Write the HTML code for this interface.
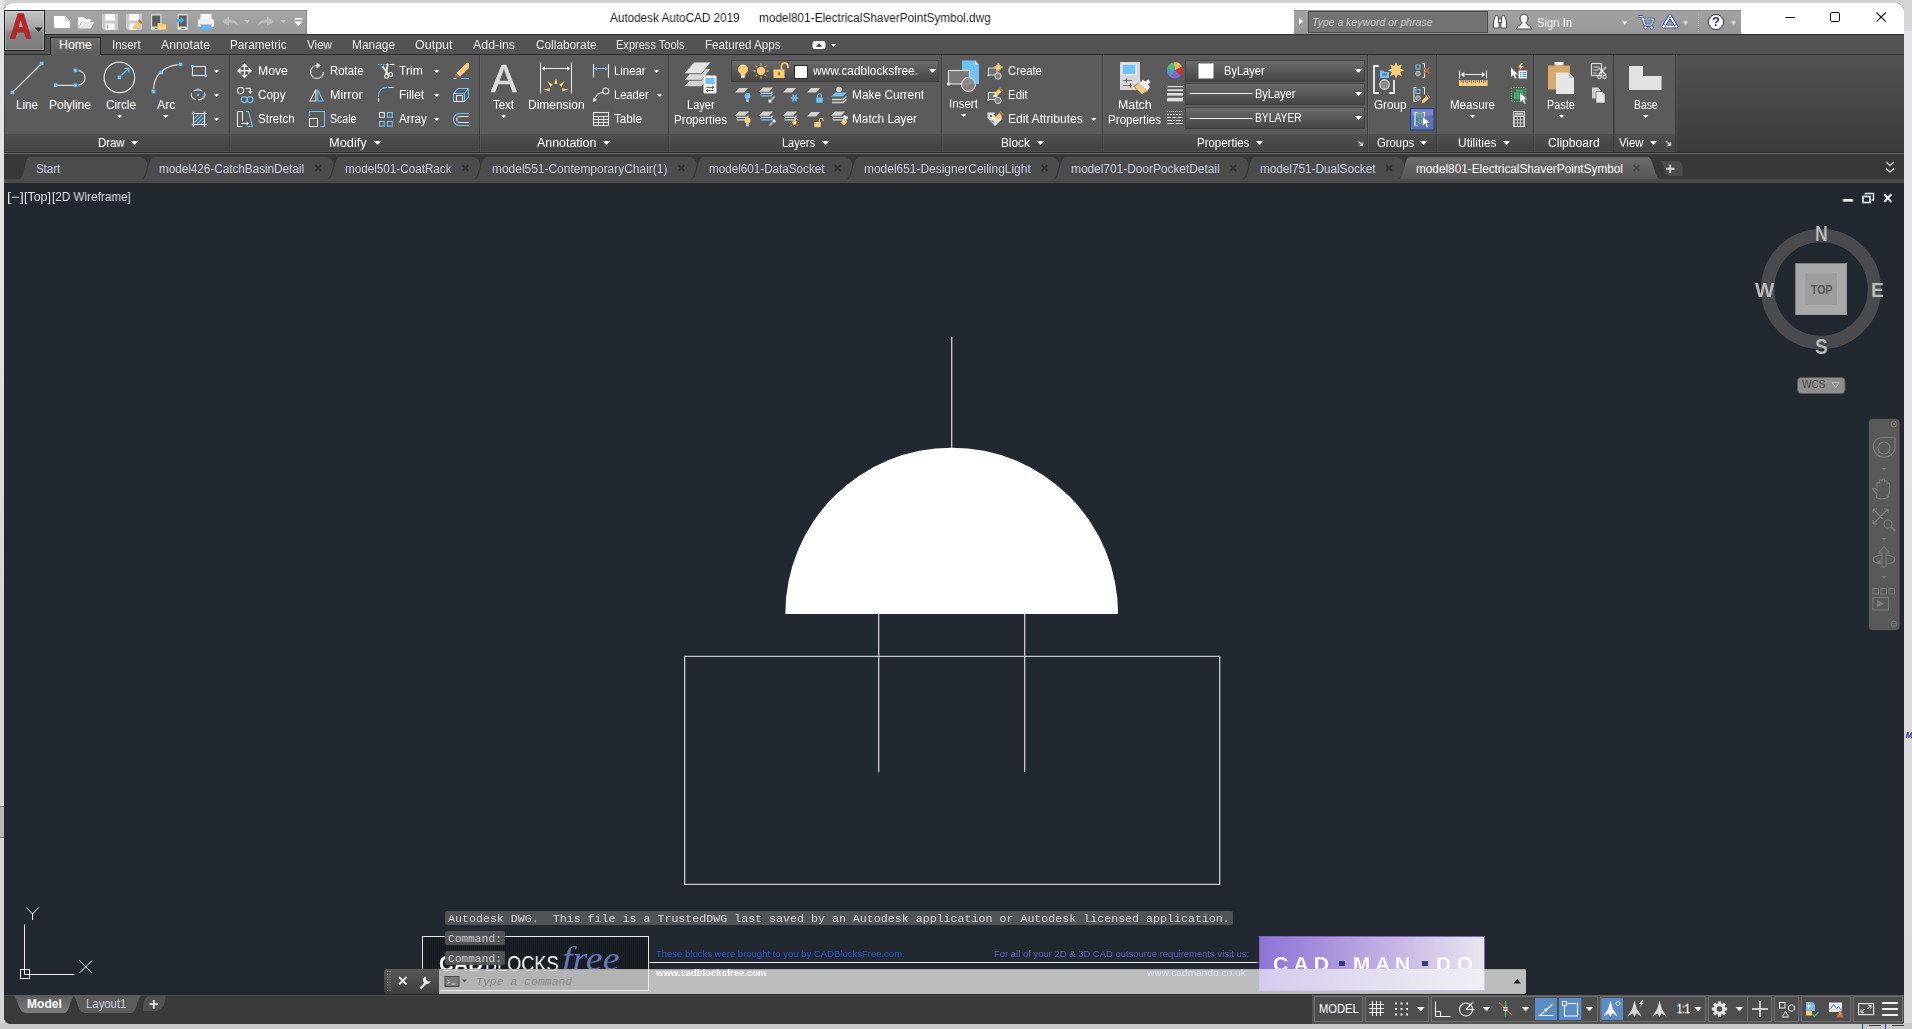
<!DOCTYPE html>
<html><head><meta charset="utf-8"><title>Autodesk AutoCAD 2019 - model801-ElectricalShaverPointSymbol.dwg</title>
<style>
html,body{margin:0;padding:0;}
body{width:1912px;height:1029px;overflow:hidden;position:relative;background:#d4d4d4;font-family:"Liberation Sans",sans-serif;}
.b{position:absolute;display:block;}
.t{position:absolute;white-space:pre;transform-origin:0 50%;}
#win{position:absolute;left:4px;top:3px;width:1900px;height:1020.5px;border-radius:8px 8px 3px 7px;overflow:hidden;background:#212830;}
#in{position:absolute;left:-4px;top:-3px;width:1912px;height:1029px;}
</style></head><body>
<div class="b" style="left:0px;top:0px;width:1912px;height:3px;background:#d2d2d2;"></div>
<div class="b" style="left:0px;top:0px;width:4px;height:1029px;background:linear-gradient(#e4e4e4 0,#e0e0e0 350px,#d5d6d5 600px,#d5d6d5 100%);"></div>
<div class="b" style="left:0px;top:806px;width:4px;height:31px;background:#b9bab9;"></div>
<div class="b" style="left:0px;top:805.5px;width:4px;height:1px;background:#7a7a7a;"></div>
<div class="b" style="left:0px;top:836.5px;width:4px;height:1px;background:#7a7a7a;"></div>
<div class="b" style="left:1904px;top:0px;width:8px;height:1029px;background:linear-gradient(#e6e6ea 0,#e6e6ea 300px,#dcdcde 700px,#dadada 100%);"></div>
<div class="b" style="left:1904px;top:0px;width:8px;height:31px;background:#d6d6d6;"></div>
<div class="t" style="left:1905.50px;top:730.00px;font-size:9px;line-height:10px;color:#2a3a9a;font-weight:bold;font-style:italic;">M</div>
<div class="b" style="left:0px;top:1023px;width:1912px;height:6px;background:#c9c9c9;"></div>
<div class="b" style="left:1862px;top:1023px;width:1.3px;height:6px;background:#1f3fc0;"></div>
<div class="b" style="left:1885px;top:1023px;width:1.3px;height:6px;background:#1f3fc0;"></div>
<div class="b" style="left:1869px;top:1025px;width:12px;height:1px;background:#3a3a3a;"></div>
<div class="b" style="left:1892px;top:1025px;width:12px;height:1px;background:#3a3a3a;"></div>
<div id="win"><div id="in">
<div class="b" style="left:0px;top:0px;width:1912px;height:34px;background:#ffffff;"></div>
<div class="b" style="left:0px;top:34px;width:1912px;height:21px;background:#535353;"></div>
<div class="b" style="left:0px;top:34px;width:1912px;height:1px;background:#2e2e2e;"></div>
<div class="b" style="left:0px;top:54px;width:1912px;height:99px;background:linear-gradient(#525252,#3b3b3b);"></div>
<div class="b" style="left:0px;top:54px;width:1912px;height:1px;background:#2b2b2b;"></div>
<div class="b" style="left:0px;top:152px;width:1912px;height:1px;background:#2a2a2a;"></div>
<div class="b" style="left:0px;top:153px;width:1912px;height:1px;background:#6a6a6a;"></div>
<div class="b" style="left:0px;top:154px;width:1912px;height:26px;background:#383838;"></div>
<div class="b" style="left:0px;top:179px;width:1912px;height:4px;background:#4a4a4a;"></div>
<div class="b" style="left:0px;top:995px;width:1912px;height:30px;background:#393a3a;"></div>
<div class="b" style="left:0px;top:995px;width:1912px;height:1px;background:#474848;"></div>
<div class="b" style="left:45px;top:10px;width:262px;height:24px;background:linear-gradient(#a6a6a6,#999999);"></div>
<div class="b" style="left:45px;top:10px;width:262px;height:1px;background:#8a8a8a;"></div>
<div class="b" style="left:306px;top:10px;width:1px;height:24px;background:#858585;"></div>
<div class="b" style="left:4px;top:10px;width:41px;height:41px;background:linear-gradient(#c4c4c4 0%,#a2a2a2 45%,#868686 55%,#7a7a7a 100%);border:1px solid #1e1e1e;box-sizing:border-box;"></div>
<div class="b" style="left:5px;top:11px;width:39px;height:39px;background:transparent;border:1px solid rgba(255,255,255,0.25);box-sizing:border-box;"></div>
<div class="t" style="left:9.80px;top:7.30px;font-size:34.5px;line-height:38px;color:#b0272c;transform:scaleX(0.8670);font-weight:bold;-webkit-text-stroke:1.3px #b0272c;">A</div>
<svg class="b" style="left:34px;top:27px;" width="9" height="6" viewBox="0 0 9 6"><path d="M0.5 0.5h8l-4 4.5z" fill="#2a2a2a"/></svg>
<svg class="b" style="left:0px;top:0px;" width="320" height="40" viewBox="0 0 320 40"><path d="M54 16h11l5 5v7h-16z" fill="#fff"/><path d="M65 16v5h5z" fill="#d6d6d6"/><path d="M78 17h6l2 2h5v3h-10l-3 6z" fill="#fdfdfd"/><path d="M82 22h12.5l-4 6.5h-12.5z" fill="#e6e6ea"/><path d="M102 14h16v16h-14l-2-2z" fill="#c9c9c9"/><rect x="105" y="14" width="10" height="6.5" fill="#fff"/><rect x="105.5" y="23.5" width="9" height="6.5" fill="#fff"/><rect x="107" y="25" width="1.2" height="3" fill="#999"/><path d="M126 14h16v16h-14l-2-2z" fill="#c9c9c9"/><rect x="129" y="14" width="10" height="6.5" fill="#fff"/><rect x="129.5" y="23.5" width="7" height="6.5" fill="#fff"/><path d="M139.5 19.5l3 3-6.5 6.5-3.5.8.8-3.5z" fill="#f3c56d"/><path d="M139.5 19.5l3 3-1.6 1.6-3-3z" fill="#b5683c"/><rect x="151" y="14" width="10.5" height="16" rx="1" fill="#d6d6d6"/><rect x="152.2" y="15.5" width="8" height="11" fill="#5c5c5c"/><rect x="155" y="28" width="3" height="1" fill="#666"/><path d="M157.5 23h4l1 1h3.5v5.5h-8.5z" fill="#f6c566"/><path d="M159 25.5h7.5l-1.5 4h-7.5z" fill="#fbd98c"/><rect x="177.5" y="14" width="10.5" height="16" rx="1" fill="#d6d6d6"/><rect x="178.7" y="15.5" width="8" height="11" fill="#5c5c5c"/><rect x="181.5" y="28" width="3" height="1" fill="#666"/><path d="M176 19h4.5v-2.2l4 3.4-4 3.4v-2.2h-4.5z" fill="#4aa7e8"/><rect x="200.5" y="14" width="11" height="5" fill="#fff"/><path d="M198 19h16v8h-2.5v-3h-11v3h-2.5z" fill="#f1f1f1"/><rect x="201" y="25" width="10" height="5" fill="#62b6f0"/><rect x="201" y="24" width="10" height="1" fill="#c8c8c8"/><path d="M222 21.5l7-5v3c5 0 8 2 9 6-2.5-2.3-5-3-9-3v3.5z" fill="#bdbdbd"/><path d="M244.5 20h5.5l-2.75 3.2z" fill="#c4c4c4"/><path d="M274 21.5l-7-5v3c-5 0-8 2-9 6 2.5-2.3 5-3 9-3v3.5z" fill="#bdbdbd"/><path d="M280.5 20h5.5l-2.75 3.2z" fill="#c4c4c4"/><rect x="294" y="18" width="8.5" height="1.6" fill="#fff"/><path d="M294 21.5h8.5l-4.25 4.5z" fill="#fff"/></svg>
<div class="t" style="left:610.00px;top:10.50px;font-size:12px;line-height:14px;color:#1c1c1c;transform:scaleX(0.9770);will-change:transform;">Autodesk AutoCAD 2019</div>
<div class="t" style="left:758.80px;top:10.50px;font-size:12px;line-height:14px;color:#1c1c1c;transform:scaleX(0.9813);will-change:transform;">model801-ElectricalShaverPointSymbol.dwg</div>
<div class="b" style="left:1294px;top:10px;width:447px;height:24px;background:linear-gradient(#a3a3a3,#979797);"></div>
<div class="b" style="left:1294px;top:10px;width:447px;height:1px;background:#8c8c8c;"></div>
<div class="b" style="left:1308px;top:11px;width:180px;height:22px;background:#737373;border:1px solid #4a4a4a;box-sizing:border-box;"></div>
<svg class="b" style="left:1296px;top:14px;" width="10" height="14" viewBox="0 0 10 14"><path d="M3 3.5l4 3.7-4 3.7z" fill="#fff"/></svg>
<div class="t" style="left:1311.80px;top:16.00px;font-size:11px;line-height:12px;color:#cfcfcf;transform:scaleX(0.9537);font-style:italic;will-change:transform;">Type a keyword or phrase</div>
<div class="t" style="left:1537.40px;top:15.80px;font-size:12.5px;line-height:14px;color:#ffffff;transform:scaleX(0.9019);will-change:transform;">Sign In</div>
<svg class="b" style="left:0px;top:0px;" width="1912" height="40" viewBox="0 0 1912 40"><g fill="#fff" stroke="#3a3a3a" stroke-width="0.9"><path d="M1494.5 17.5q0-2 2-2t2 2l.6 4.5v6h-5.6v-6z"/><path d="M1501.5 17.5q0-2 2-2t2 2l1 4.5v6h-5.6v-6z"/><rect x="1498.3" y="19" width="3.4" height="3.4"/></g><g fill="#f4f4f4" stroke="#3a3a3a" stroke-width="0.9"><path d="M1516.5 29q0-3 4.5-4.5l1-1.5q-2-2-2-5 0-4 4-4t4 4q0 3-2 5l1 1.5q4.500 1.500 4.500 4.500z"/></g><path d="M1622.1000000000001 21.5h5.2l-2.6 3z" fill="#fff"/><path d="M1682.9 21.5h5.2l-2.6 3z" fill="#fff"/><path d="M1730.9 21.5h5.2l-2.6 3z" fill="#fff"/><g fill="none" stroke="#1f3a93" stroke-width="2.6" stroke-linejoin="round" stroke-linecap="round"><path d="M1639 16.500h3l3 8.500h6.500l2-6h-10"/></g><g fill="none" stroke="#fff" stroke-width="1.200" stroke-linejoin="round" stroke-linecap="round"><path d="M1639 16.500h3l3 8.500h6.500l2-6h-10"/></g><circle cx="1645.5" cy="27.500" r="1.600" fill="#fff" stroke="#1f3a93" stroke-width="0.800"/><circle cx="1651.5" cy="27.500" r="1.600" fill="#fff" stroke="#1f3a93" stroke-width="0.800"/><g fill="none" stroke-linejoin="round"><path d="M1670 16l6.500 10.500h-13z" stroke="#1f3a93" stroke-width="3.600"/><path d="M1670 16l6.500 10.500h-13z" stroke="#fff" stroke-width="1.800"/></g><circle cx="1670" cy="15.800" r="1.700" fill="#fff" stroke="#1f3a93" stroke-width="0.700"/><circle cx="1663.800" cy="26.300" r="1.700" fill="#fff" stroke="#1f3a93" stroke-width="0.700"/><circle cx="1676.200" cy="26.300" r="1.700" fill="#fff" stroke="#1f3a93" stroke-width="0.700"/><path d="M1698.5 13v19" stroke="#b4b4b4" stroke-width="1" stroke-dasharray="1 1"/><circle cx="1716" cy="22" r="7.600" fill="#fff" stroke="#333" stroke-width="1"/></svg>
<div class="t" style="left:1712.30px;top:14.40px;font-size:13px;line-height:15px;color:#1a2f9c;font-weight:bold;will-change:transform;">?</div>
<svg class="b" style="left:1780px;top:8px;" width="112" height="20" viewBox="0 0 112 20"><path d="M5.5 9.500h9.500" stroke="#111" stroke-width="1"/><rect x="50.500" y="4.500" width="9" height="9" rx="1" fill="none" stroke="#111" stroke-width="1"/><path d="M96.500 4.500l9.200 9.200M105.700 4.500l-9.200 9.200" stroke="#111" stroke-width="1.100"/></svg>
<div class="b" style="left:50px;top:37px;width:51px;height:18px;background:linear-gradient(#6e6e6e,#5c5c5c);border:1px solid #262626;border-bottom:none;box-sizing:border-box;"></div>
<div class="t" style="left:59.20px;top:38.30px;font-size:12px;line-height:14px;color:#ffffff;transform:scaleX(1.0247);">Home</div>
<div class="t" style="left:112.00px;top:38.30px;font-size:12px;line-height:14px;color:#ececec;transform:scaleX(0.9530);">Insert</div>
<div class="t" style="left:161.00px;top:38.30px;font-size:12px;line-height:14px;color:#ececec;transform:scaleX(1.0200);">Annotate</div>
<div class="t" style="left:230.00px;top:38.30px;font-size:12px;line-height:14px;color:#ececec;transform:scaleX(0.9739);">Parametric</div>
<div class="t" style="left:307.00px;top:38.30px;font-size:12px;line-height:14px;color:#ececec;transform:scaleX(0.9693);">View</div>
<div class="t" style="left:352.00px;top:38.30px;font-size:12px;line-height:14px;color:#ececec;transform:scaleX(0.9916);">Manage</div>
<div class="t" style="left:415.00px;top:38.30px;font-size:12px;line-height:14px;color:#ececec;transform:scaleX(1.0410);">Output</div>
<div class="t" style="left:473.00px;top:38.30px;font-size:12px;line-height:14px;color:#ececec;transform:scaleX(1.0323);">Add-ins</div>
<div class="t" style="left:535.50px;top:38.30px;font-size:12px;line-height:14px;color:#ececec;transform:scaleX(0.9858);">Collaborate</div>
<div class="t" style="left:616.40px;top:38.30px;font-size:12px;line-height:14px;color:#ececec;transform:scaleX(0.9211);">Express Tools</div>
<div class="t" style="left:705.00px;top:38.30px;font-size:12px;line-height:14px;color:#ececec;transform:scaleX(0.9686);">Featured Apps</div>
<svg class="b" style="left:810px;top:38px;" width="30" height="14" viewBox="0 0 30 14"><rect x="2.500" y="3" width="13" height="8" rx="2.500" fill="#f4f4f4"/><path d="M6 8.800h6l-3-3.600z" fill="#333"/><path d="M21 6h5l-2.500 3z" fill="#eee"/></svg>
<div class="b" style="left:5px;top:55px;width:224px;height:79px;background:#5b5b5b;"></div>
<div class="b" style="left:5px;top:134px;width:224px;height:18px;background:linear-gradient(#4f4f4f,#434343);"></div>
<div class="b" style="left:5px;top:151px;width:224px;height:1px;background:#505050;"></div>
<div class="t" style="left:97.50px;top:135.60px;font-size:12px;line-height:14px;color:#ffffff;transform:scaleX(0.9464);">Draw</div>
<svg class="b" style="left:129.7px;top:140.2px;" width="9" height="6" viewBox="0 0 9 6"><path d="M1 1h7l-3.5 4z" fill="#fff"/></svg>
<div class="b" style="left:230px;top:55px;width:249px;height:79px;background:#5b5b5b;"></div>
<div class="b" style="left:230px;top:134px;width:249px;height:18px;background:linear-gradient(#4f4f4f,#434343);"></div>
<div class="b" style="left:230px;top:151px;width:249px;height:1px;background:#505050;"></div>
<div class="t" style="left:329.40px;top:135.60px;font-size:12px;line-height:14px;color:#ffffff;transform:scaleX(1.0667);">Modify</div>
<svg class="b" style="left:372.8px;top:140.2px;" width="9" height="6" viewBox="0 0 9 6"><path d="M1 1h7l-3.5 4z" fill="#fff"/></svg>
<div class="b" style="left:480px;top:55px;width:188px;height:79px;background:#5b5b5b;"></div>
<div class="b" style="left:480px;top:134px;width:188px;height:18px;background:linear-gradient(#4f4f4f,#434343);"></div>
<div class="b" style="left:480px;top:151px;width:188px;height:1px;background:#505050;"></div>
<div class="t" style="left:537.30px;top:135.60px;font-size:12px;line-height:14px;color:#ffffff;transform:scaleX(1.0352);">Annotation</div>
<svg class="b" style="left:602.4000000000001px;top:140.2px;" width="9" height="6" viewBox="0 0 9 6"><path d="M1 1h7l-3.5 4z" fill="#fff"/></svg>
<div class="b" style="left:669px;top:55px;width:272px;height:79px;background:#5b5b5b;"></div>
<div class="b" style="left:669px;top:134px;width:272px;height:18px;background:linear-gradient(#4f4f4f,#434343);"></div>
<div class="b" style="left:669px;top:151px;width:272px;height:1px;background:#505050;"></div>
<div class="t" style="left:782.10px;top:135.60px;font-size:12px;line-height:14px;color:#ffffff;transform:scaleX(0.9134);">Layers</div>
<svg class="b" style="left:820.7px;top:140.2px;" width="9" height="6" viewBox="0 0 9 6"><path d="M1 1h7l-3.5 4z" fill="#fff"/></svg>
<div class="b" style="left:942px;top:55px;width:160px;height:79px;background:#5b5b5b;"></div>
<div class="b" style="left:942px;top:134px;width:160px;height:18px;background:linear-gradient(#4f4f4f,#434343);"></div>
<div class="b" style="left:942px;top:151px;width:160px;height:1px;background:#505050;"></div>
<div class="t" style="left:1001.40px;top:135.60px;font-size:12px;line-height:14px;color:#ffffff;transform:scaleX(0.9815);">Block</div>
<svg class="b" style="left:1035.9px;top:140.2px;" width="9" height="6" viewBox="0 0 9 6"><path d="M1 1h7l-3.5 4z" fill="#fff"/></svg>
<div class="b" style="left:1103px;top:55px;width:264px;height:79px;background:#5b5b5b;"></div>
<div class="b" style="left:1103px;top:134px;width:264px;height:18px;background:linear-gradient(#4f4f4f,#434343);"></div>
<div class="b" style="left:1103px;top:151px;width:264px;height:1px;background:#505050;"></div>
<div class="t" style="left:1196.50px;top:135.60px;font-size:12px;line-height:14px;color:#ffffff;transform:scaleX(0.9563);">Properties</div>
<svg class="b" style="left:1254.5px;top:140.2px;" width="9" height="6" viewBox="0 0 9 6"><path d="M1 1h7l-3.5 4z" fill="#fff"/></svg>
<div class="b" style="left:1368px;top:55px;width:68px;height:79px;background:#5b5b5b;"></div>
<div class="b" style="left:1368px;top:134px;width:68px;height:18px;background:linear-gradient(#4f4f4f,#434343);"></div>
<div class="b" style="left:1368px;top:151px;width:68px;height:1px;background:#505050;"></div>
<div class="t" style="left:1376.60px;top:135.60px;font-size:12px;line-height:14px;color:#ffffff;transform:scaleX(0.9428);">Groups</div>
<svg class="b" style="left:1419.4px;top:140.2px;" width="9" height="6" viewBox="0 0 9 6"><path d="M1 1h7l-3.5 4z" fill="#fff"/></svg>
<div class="b" style="left:1437px;top:55px;width:96px;height:79px;background:#5b5b5b;"></div>
<div class="b" style="left:1437px;top:134px;width:96px;height:18px;background:linear-gradient(#4f4f4f,#434343);"></div>
<div class="b" style="left:1437px;top:151px;width:96px;height:1px;background:#505050;"></div>
<div class="t" style="left:1458.20px;top:135.60px;font-size:12px;line-height:14px;color:#ffffff;transform:scaleX(0.9956);">Utilities</div>
<svg class="b" style="left:1502.4px;top:140.2px;" width="9" height="6" viewBox="0 0 9 6"><path d="M1 1h7l-3.5 4z" fill="#fff"/></svg>
<div class="b" style="left:1534px;top:55px;width:79px;height:79px;background:#5b5b5b;"></div>
<div class="b" style="left:1534px;top:134px;width:79px;height:18px;background:linear-gradient(#4f4f4f,#434343);"></div>
<div class="b" style="left:1534px;top:151px;width:79px;height:1px;background:#505050;"></div>
<div class="t" style="left:1548.30px;top:135.60px;font-size:12px;line-height:14px;color:#ffffff;transform:scaleX(1.0066);">Clipboard</div>
<div class="b" style="left:1614.5px;top:55px;width:60.5px;height:79px;background:#5b5b5b;"></div>
<div class="b" style="left:1614.5px;top:134px;width:60.5px;height:18px;background:linear-gradient(#4f4f4f,#434343);"></div>
<div class="b" style="left:1614.5px;top:151px;width:60.5px;height:1px;background:#505050;"></div>
<div class="t" style="left:1619.30px;top:135.60px;font-size:12px;line-height:14px;color:#ffffff;transform:scaleX(0.9460);">View</div>
<svg class="b" style="left:1649.4px;top:140.2px;" width="9" height="6" viewBox="0 0 9 6"><path d="M1 1h7l-3.5 4z" fill="#fff"/></svg>
<div class="b" style="left:229px;top:55px;width:1px;height:97px;background:#3c3c3c;"></div>
<div class="b" style="left:230px;top:55px;width:1px;height:97px;background:rgba(255,255,255,0.06);"></div>
<div class="b" style="left:479px;top:55px;width:1px;height:97px;background:#3c3c3c;"></div>
<div class="b" style="left:480px;top:55px;width:1px;height:97px;background:rgba(255,255,255,0.06);"></div>
<div class="b" style="left:668px;top:55px;width:1px;height:97px;background:#3c3c3c;"></div>
<div class="b" style="left:669px;top:55px;width:1px;height:97px;background:rgba(255,255,255,0.06);"></div>
<div class="b" style="left:941px;top:55px;width:1px;height:97px;background:#3c3c3c;"></div>
<div class="b" style="left:942px;top:55px;width:1px;height:97px;background:rgba(255,255,255,0.06);"></div>
<div class="b" style="left:1102px;top:55px;width:1px;height:97px;background:#3c3c3c;"></div>
<div class="b" style="left:1103px;top:55px;width:1px;height:97px;background:rgba(255,255,255,0.06);"></div>
<div class="b" style="left:1367px;top:55px;width:1px;height:97px;background:#3c3c3c;"></div>
<div class="b" style="left:1368px;top:55px;width:1px;height:97px;background:rgba(255,255,255,0.06);"></div>
<div class="b" style="left:1436px;top:55px;width:1px;height:97px;background:#3c3c3c;"></div>
<div class="b" style="left:1437px;top:55px;width:1px;height:97px;background:rgba(255,255,255,0.06);"></div>
<div class="b" style="left:1533px;top:55px;width:1px;height:97px;background:#3c3c3c;"></div>
<div class="b" style="left:1534px;top:55px;width:1px;height:97px;background:rgba(255,255,255,0.06);"></div>
<div class="b" style="left:1613px;top:55px;width:1px;height:97px;background:#3c3c3c;"></div>
<div class="b" style="left:1614px;top:55px;width:1px;height:97px;background:rgba(255,255,255,0.06);"></div>
<div class="b" style="left:1675px;top:55px;width:1px;height:97px;background:#3c3c3c;"></div>
<div class="b" style="left:1676px;top:55px;width:1px;height:97px;background:rgba(255,255,255,0.06);"></div>
<svg class="b" style="left:1357px;top:140px;" width="7" height="7" viewBox="0 0 7 7"><path d="M1 1l4 4M5.500 2v3.500h-3.500" stroke="#e0e0e0" stroke-width="1.200" fill="none"/></svg>
<svg class="b" style="left:1665px;top:140px;" width="7" height="7" viewBox="0 0 7 7"><path d="M1 1l4 4M5.500 2v3.500h-3.500" stroke="#e0e0e0" stroke-width="1.200" fill="none"/></svg>
<svg class="b" style="left:0px;top:55px;" width="230" height="80" viewBox="0 55 230 80"><path d="M12.400 92.500L41.700 63.500" stroke="#dedede" stroke-width="1.200"/><rect x="10.60" y="90.70" width="3.6" height="3.6" fill="#6fc3f7"/><rect x="39.90" y="61.70" width="3.6" height="3.6" fill="#6fc3f7"/><path d="M55.600 85.300H75.400M78 85.300A8 7.500 0 0 0 78 70.400" stroke="#dedede" stroke-width="1.200" fill="none"/><rect x="53.80" y="83.50" width="3.6" height="3.6" fill="#6fc3f7"/><rect x="73.60" y="83.50" width="3.6" height="3.6" fill="#6fc3f7"/><rect x="73.60" y="68.60" width="3.6" height="3.6" fill="#6fc3f7"/><circle cx="119.400" cy="77.400" r="15.300" stroke="#dedede" stroke-width="1.200" fill="none"/><rect x="117.60" y="75.60" width="3.6" height="3.6" fill="#6fc3f7"/><path d="M121.500 75.300L128.500 68.500M124.500 68.300h4.300v4.300" stroke="#6fc3f7" stroke-width="1.200" fill="none"/><path d="M153.500 89.500Q154.500 68 178.500 64.400" stroke="#dedede" stroke-width="1.200" fill="none"/><rect x="151.70" y="89.70" width="3.6" height="3.6" fill="#6fc3f7"/><rect x="159.60" y="70.80" width="3.6" height="3.6" fill="#6fc3f7"/><rect x="178.80" y="62.60" width="3.6" height="3.6" fill="#6fc3f7"/><rect x="192.500" y="66.500" width="13" height="9" stroke="#dedede" stroke-width="1.200" fill="none"/><rect x="190.90" y="64.90" width="2.6" height="2.6" fill="#6fc3f7"/><rect x="204.50" y="74.50" width="2.6" height="2.6" fill="#6fc3f7"/><ellipse cx="198" cy="94.800" rx="6.800" ry="5" stroke="#dedede" stroke-width="1.200" fill="none" stroke-dasharray="9 2.500"/><rect x="196.90" y="93.70" width="2.2" height="2.2" fill="#6fc3f7"/><rect x="196.90" y="88.40" width="2.2" height="2.2" fill="#6fc3f7"/><rect x="203.70" y="93.70" width="2.2" height="2.2" fill="#6fc3f7"/><rect x="194" y="114" width="10" height="10" fill="#575757"/><path d="M194.500 118.500l4-4M194.500 122.500l8-8M197 124l6.500-6.500M201 124l3-3" stroke="#6fc3f7" stroke-width="1.100"/><path d="M191 113.500h16M191 124.500h16M193.500 111v16M204.500 111v16" stroke="#dedede" stroke-width="1.200" fill="none"/></svg>
<div class="t" style="left:16.40px;top:98.00px;font-size:12px;line-height:14px;color:#fff;transform:scaleX(0.9653);">Line</div>
<div class="t" style="left:49.30px;top:98.00px;font-size:12px;line-height:14px;color:#fff;transform:scaleX(0.9971);">Polyline</div>
<div class="t" style="left:105.50px;top:98.00px;font-size:12px;line-height:14px;color:#fff;transform:scaleX(0.9750);">Circle</div>
<div class="t" style="left:157.00px;top:98.00px;font-size:12px;line-height:14px;color:#fff;transform:scaleX(1.0167);">Arc</div>
<svg class="b" style="left:115.89999999999999px;top:114.1px;" width="7.4" height="5" viewBox="0 0 7.4 5"><path d="M1 1h5.4l-2.7 3z" fill="#fff"/></svg>
<svg class="b" style="left:161.9px;top:114.1px;" width="7.4" height="5" viewBox="0 0 7.4 5"><path d="M1 1h5.4l-2.7 3z" fill="#fff"/></svg>
<svg class="b" style="left:213.0px;top:68.5px;" width="7.4" height="5" viewBox="0 0 7.4 5"><path d="M1 1h5.4l-2.7 3z" fill="#fff"/></svg>
<svg class="b" style="left:213.0px;top:92.5px;" width="7.4" height="5" viewBox="0 0 7.4 5"><path d="M1 1h5.4l-2.7 3z" fill="#fff"/></svg>
<svg class="b" style="left:213.0px;top:116.8px;" width="7.4" height="5" viewBox="0 0 7.4 5"><path d="M1 1h5.4l-2.7 3z" fill="#fff"/></svg>
<svg class="b" style="left:230px;top:55px;" width="250" height="80" viewBox="230 55 250 80"><path d="M237.5 70.8H251.5M244.5 63.8V77.8" stroke="#e4e4e4" stroke-width="1.400"/><path d="M237.0 70.8l3.6-3.6v7.2zM252.0 70.8l-3.6-3.6v7.2zM244.5 63.3l-3.6 3.6h7.2zM244.5 78.3l-3.6-3.6h7.2z" fill="#e4e4e4"/><circle cx="240.600" cy="90.500" r="3.100" stroke="#e4e4e4" stroke-width="1.100" fill="none"/><path d="M245.500 88.400h4.800v3.500" stroke="#e4e4e4" stroke-width="1.100" fill="none"/><path d="M248 91.300h4.600l-2.300 2.800z" fill="#e4e4e4"/><circle cx="244.300" cy="99.600" r="3" stroke="#6fc3f7" stroke-width="1.100" fill="none"/><circle cx="250" cy="99.600" r="3" stroke="#6fc3f7" stroke-width="1.100" fill="none"/><path d="M242.500 111.500h-5v15h5" stroke="#e4e4e4" stroke-width="1.100" fill="none"/><path d="M242.500 111.500v10M241 123.500h6" stroke="#e4e4e4" stroke-width="1.100" fill="none"/><path d="M246.500 121.500l2.500 2-2.500 2z" fill="#e4e4e4"/><path d="M246 111.500h2.500l4 15h-5" stroke="#6fc3f7" stroke-width="1.100" fill="none"/><path d="M317.500 65.500A6.500 6.500 0 1 0 323.500 72" stroke="#e4e4e4" stroke-width="1.200" fill="none"/><path d="M316.500 62.300l4.500 3.200-4.500 3.200z" fill="#e4e4e4"/><path d="M315.800 89.500v11.500h-5.800z" stroke="#e4e4e4" stroke-width="1.100" fill="none"/><path d="M317.700 89.500v11.500h5.500z" stroke="#6fc3f7" stroke-width="1.100" fill="none"/><path d="M309.500 116v-4.500h15v15h-4.500" stroke="#6fc3f7" stroke-width="1.100" fill="none"/><rect x="309.500" y="118.500" width="8" height="8" stroke="#e4e4e4" stroke-width="1.100" fill="none"/><path d="M378 64.500h9" stroke="#6fc3f7" stroke-width="1" stroke-dasharray="1.500 1"/><path d="M389.500 64.500h5" stroke="#e4e4e4" stroke-width="1.100"/><path d="M382.300 66l6.200 8.500M387.800 63.500l-1.800 10.500" stroke="#e4e4e4" stroke-width="1.900" fill="none"/><circle cx="386.600" cy="76.200" r="1.900" stroke="#e4e4e4" stroke-width="1.200" fill="none"/><circle cx="390.700" cy="74.400" r="1.900" stroke="#e4e4e4" stroke-width="1.200" fill="none"/><path d="M378.500 96.500Q378.500 87.500 387 87.500" stroke="#6fc3f7" stroke-width="1.100" fill="none"/><path d="M388.500 87.500h5.500M378.500 98v4" stroke="#e4e4e4" stroke-width="1.100"/><rect x="379.5" y="112.5" width="4.800" height="4.800" stroke="#e4e4e4" stroke-width="1.100" fill="none"/><rect x="387.5" y="112.5" width="4.800" height="4.800" stroke="#6fc3f7" stroke-width="1.100" fill="none"/><rect x="379.5" y="121.5" width="4.800" height="4.800" stroke="#6fc3f7" stroke-width="1.100" fill="none"/><rect x="387.5" y="121.5" width="4.800" height="4.800" stroke="#6fc3f7" stroke-width="1.100" fill="none"/><path d="M467 62.500l2 0.500v5l-8 7.500-3.500-3.500z" fill="#f6c978"/><path d="M457.500 72l3.500 3.500-1 1-3.500-3.500z" fill="#fff"/><path d="M456.500 73l3.500 3.500-1.800 1.500-3-1.500-.2-2z" fill="#b5653a"/><path d="M453.500 78.500h3" stroke="#e4e4e4" stroke-width="1"/><path d="M461 78.500h8" stroke="#6fc3f7" stroke-width="1"/><path d="M453.500 101.500V93.500L458 88.500H468.500V97L464.500 101.500M453.500 93.500H464.500L468.500 88.500M464.500 93.500V101.500" stroke="#6fc3f7" stroke-width="1.100" fill="none"/><path d="M456.500 101.500V95.500H462.500V101.500" stroke="#e4e4e4" stroke-width="1.100" fill="none"/><path d="M453.500 101.500H464.500" stroke="#e4e4e4" stroke-width="1.100"/><path d="M469 113.500h-9.500a6 6 0 0 0 0 12h9.500" stroke="#6fc3f7" stroke-width="1.100" fill="none"/><path d="M469 116.500h-9.300a3 3 0 0 0 0 6h9.300" stroke="#e4e4e4" stroke-width="1.100" fill="none"/></svg>
<div class="t" style="left:258.30px;top:63.60px;font-size:12px;line-height:14px;color:#fff;transform:scaleX(1.0190);">Move</div>
<div class="t" style="left:258.30px;top:87.70px;font-size:12px;line-height:14px;color:#fff;transform:scaleX(0.9852);">Copy</div>
<div class="t" style="left:258.30px;top:111.70px;font-size:12px;line-height:14px;color:#fff;transform:scaleX(0.9654);">Stretch</div>
<div class="t" style="left:330.40px;top:63.60px;font-size:12px;line-height:14px;color:#fff;transform:scaleX(0.9503);">Rotate</div>
<div class="t" style="left:330.40px;top:87.70px;font-size:12px;line-height:14px;color:#fff;transform:scaleX(1.0407);">Mirror</div>
<div class="t" style="left:330.40px;top:111.70px;font-size:12px;line-height:14px;color:#fff;transform:scaleX(0.8828);">Scale</div>
<div class="t" style="left:399.10px;top:63.60px;font-size:12px;line-height:14px;color:#fff;transform:scaleX(1.0109);">Trim</div>
<div class="t" style="left:399.10px;top:87.70px;font-size:12px;line-height:14px;color:#fff;transform:scaleX(0.9907);">Fillet</div>
<div class="t" style="left:399.10px;top:111.70px;font-size:12px;line-height:14px;color:#fff;transform:scaleX(0.9731);">Array</div>
<svg class="b" style="left:433.1px;top:68.8px;" width="7.4" height="5" viewBox="0 0 7.4 5"><path d="M1 1h5.4l-2.7 3z" fill="#fff"/></svg>
<svg class="b" style="left:433.1px;top:92.8px;" width="7.4" height="5" viewBox="0 0 7.4 5"><path d="M1 1h5.4l-2.7 3z" fill="#fff"/></svg>
<svg class="b" style="left:433.1px;top:116.8px;" width="7.4" height="5" viewBox="0 0 7.4 5"><path d="M1 1h5.4l-2.7 3z" fill="#fff"/></svg>
<svg class="b" style="left:480px;top:55px;" width="190" height="80" viewBox="480 55 190 80"><path d="M540.500 62v32M571.500 62v32" stroke="#e4e4e4" stroke-width="1.100"/><path d="M543 68.500h26" stroke="#e4e4e4" stroke-width="1.100"/><path d="M541.500 68.500l3.500-2.300v4.600zM570.500 68.500l-3.500-2.300v4.600z" fill="#e4e4e4"/><path d="M556.0 77.7L557.6 84.1L554.4 84.1z" fill="#fbcd78"/><path d="M564.6 81.1L561.4 86.9L559.1 84.7z" fill="#fbcd78"/><path d="M547.4 81.1L552.9 84.7L550.6 86.9z" fill="#fbcd78"/><path d="M568.6 89.4L562.3 91.5L562.1 88.3z" fill="#fbcd78"/><path d="M543.4 89.4L549.9 88.3L549.7 91.5z" fill="#fbcd78"/><path d="M593.500 64v14M608.500 64v14" stroke="#e4e4e4" stroke-width="1.100"/><path d="M595 68.500h12" stroke="#6fc3f7" stroke-width="1.200"/><path d="M594 68.500l3-2v4zM608 68.500l-3-2v4z" fill="#6fc3f7"/><circle cx="605.800" cy="91" r="3" stroke="#e4e4e4" stroke-width="1.100" fill="none"/><path d="M603 92.500q-6 0-8.500 7" stroke="#e4e4e4" stroke-width="1.100" fill="none"/><path d="M592.800 102.500l.7-5 3.500 2.500z" fill="#e4e4e4"/><rect x="593.500" y="112.500" width="15" height="13" stroke="#e4e4e4" stroke-width="1.100" fill="none"/><path d="M593.500 116.500h15M593.500 119.500h15M593.500 122.500h15M598.500 116.500v9M603.500 116.500v9" stroke="#e4e4e4" stroke-width="1"/></svg>
<div class="t" style="left:491.00px;top:57.00px;font-size:39px;line-height:43px;color:#dcdcdc;transform:scaleX(0.9880);-webkit-text-stroke:0.7px #dcdcdc;">A</div>
<div class="t" style="left:493.40px;top:97.60px;font-size:12px;line-height:14px;color:#fff;transform:scaleX(0.9542);">Text</div>
<div class="t" style="left:528.30px;top:97.60px;font-size:12px;line-height:14px;color:#fff;transform:scaleX(0.9984);">Dimension</div>
<svg class="b" style="left:500.1px;top:114.1px;" width="7.4" height="5" viewBox="0 0 7.4 5"><path d="M1 1h5.4l-2.7 3z" fill="#fff"/></svg>
<div class="t" style="left:614.40px;top:63.60px;font-size:12px;line-height:14px;color:#fff;transform:scaleX(0.9473);">Linear</div>
<svg class="b" style="left:652.9px;top:68.8px;" width="7.4" height="5" viewBox="0 0 7.4 5"><path d="M1 1h5.4l-2.7 3z" fill="#fff"/></svg>
<div class="t" style="left:614.40px;top:87.70px;font-size:12px;line-height:14px;color:#fff;transform:scaleX(0.9260);">Leader</div>
<svg class="b" style="left:656.0999999999999px;top:92.8px;" width="7.4" height="5" viewBox="0 0 7.4 5"><path d="M1 1h5.4l-2.7 3z" fill="#fff"/></svg>
<div class="t" style="left:614.40px;top:111.70px;font-size:12px;line-height:14px;color:#fff;transform:scaleX(0.9725);">Table</div>
<svg class="b" style="left:669px;top:55px;" width="275" height="80" viewBox="669 55 275 80"><path d="M693.800 75H711.300L701.500 86.8H683.800Z" fill="#d2d2d2" stroke="#5b5b5b" stroke-width="0.900"/><path d="M693.800 68.5H711.300L701.500 80.3H683.800Z" fill="#dadada" stroke="#5b5b5b" stroke-width="0.900"/><path d="M693.800 62H711.300L701.500 73.8H683.800Z" fill="#e4e4e4" stroke="#5b5b5b" stroke-width="0.900"/><rect x="703.500" y="75.500" width="13" height="18" rx="1" fill="#efefef"/><rect x="705.500" y="78" width="9" height="6" fill="#6fc3f7"/><path d="M706.500 87.500h7M706.500 90.500h7" stroke="#555" stroke-width="0.900"/><path d="M712 86l1.800 1.500-1.800 1.500M708 89l-1.800 1.500 1.800 1.500" stroke="#555" stroke-width="0.800" fill="none"/><defs><linearGradient id="cb" x1="0" y1="0" x2="0" y2="1"><stop offset="0" stop-color="#6c6c6c"/><stop offset="0.500" stop-color="#585858"/><stop offset="1" stop-color="#464646"/></linearGradient></defs><rect x="731.500" y="60.500" width="207" height="21" fill="url(#cb)" stroke="#2c2c2c" stroke-width="1" stroke-dasharray="1 1"/><circle cx="743" cy="69.500" r="5" fill="#fbcd78"/><rect x="740.800" y="73.500" width="4.400" height="2.500" fill="#fbcd78"/><rect x="741" y="76" width="4" height="2" fill="#f4f4f4"/><circle cx="761" cy="71" r="4.200" fill="#fbcd78"/><path d="M766.4 71.0L768.6 71.0" stroke="#fbcd78" stroke-width="1.100"/><path d="M764.8 74.8L766.4 76.4" stroke="#fbcd78" stroke-width="1.100"/><path d="M761.0 76.4L761.0 78.6" stroke="#fbcd78" stroke-width="1.100"/><path d="M757.2 74.8L755.6 76.4" stroke="#fbcd78" stroke-width="1.100"/><path d="M755.6 71.0L753.4 71.0" stroke="#fbcd78" stroke-width="1.100"/><path d="M757.2 67.2L755.6 65.6" stroke="#fbcd78" stroke-width="1.100"/><path d="M761.0 65.6L761.0 63.4" stroke="#fbcd78" stroke-width="1.100"/><path d="M764.8 67.2L766.4 65.6" stroke="#fbcd78" stroke-width="1.100"/><rect x="773.500" y="69.500" width="11" height="8.500" fill="#fbcd78"/><path d="M781.500 69.500v-3.300a3.200 3.200 0 0 1 6.400 0v2" stroke="#fbcd78" stroke-width="1.600" fill="none"/><rect x="778.300" y="72.300" width="1.500" height="3" fill="#7a5a20"/><rect x="794.500" y="65.500" width="13" height="13" fill="#fff" stroke="#2a2a2a" stroke-width="1"/><path d="M739 88h9l-4 4.5h-9z" fill="#d2d2d2"/><circle cx="747.5" cy="96" r="3" fill="#6fc3f7"/><rect x="746.2" y="98.5" width="2.600" height="1.800" fill="#6fc3f7"/><rect x="746.3" y="100.3" width="2.400" height="1.500" fill="#f4f4f4"/><path d="M763 87.5h10l-4 4.2h-10z" fill="#d2d2d2"/><path d="M760.5 93.3h10.5l1.500-1.600" stroke="#d2d2d2" stroke-width="1.300" fill="none"/><path d="M760.5 95.9h10.5l1.500-1.600" stroke="#6fc3f7" stroke-width="1.300" fill="none"/><path d="M774.500 96.500l-5 5" stroke="#eee" stroke-width="1.200"/><path d="M768.500 102.500v-3.800l3.800 3.800z" fill="#eee"/><path d="M787 88h9l-4 4.5h-9z" fill="#d2d2d2"/><path d="M790.5 98.0L798.5 98.0" stroke="#6fc3f7" stroke-width="1.200"/><path d="M792.5 94.5L796.5 101.5" stroke="#6fc3f7" stroke-width="1.200"/><path d="M796.5 94.5L792.5 101.5" stroke="#6fc3f7" stroke-width="1.200"/><circle cx="794.500" cy="98" r="2.300" stroke="#6fc3f7" stroke-width="0.800" fill="none"/><path d="M811 88h9l-4 4.5h-9z" fill="#d2d2d2"/><rect x="816.3" y="97.5" width="6.400" height="5.200" fill="#6fc3f7"/><path d="M817.6 97.5v-1.800a1.900 1.900 0 0 1 3.800 0v1.800" stroke="#6fc3f7" stroke-width="1.100" fill="none"/><circle cx="839" cy="89.500" r="2.800" fill="#d2d2d2"/><path d="M831 96.500l4.500-4h11.500l-4.500 4z" fill="#6fc3f7"/><path d="M832 99.500h11l3.500-3M832 102.500h11l3.500-3" stroke="#d2d2d2" stroke-width="1.300" fill="none"/><path d="M739 111.5h10l-4 4.2h-10z" fill="#d2d2d2"/><path d="M736.5 117.3h10.5l1.500-1.600" stroke="#d2d2d2" stroke-width="1.300" fill="none"/><path d="M736.5 119.9h10.5l1.500-1.600" stroke="#d2d2d2" stroke-width="1.300" fill="none"/><circle cx="747.5" cy="120.5" r="3" fill="#fbcd78"/><rect x="746.2" y="123.0" width="2.600" height="1.800" fill="#fbcd78"/><rect x="746.3" y="124.8" width="2.400" height="1.500" fill="#f4f4f4"/><path d="M763 111.5h10l-4 4.2h-10z" fill="#d2d2d2"/><path d="M760.5 117.3h10.5l1.500-1.600" stroke="#d2d2d2" stroke-width="1.300" fill="none"/><path d="M760.5 119.9h10.5l1.500-1.600" stroke="#6fc3f7" stroke-width="1.300" fill="none"/><path d="M769.500 125.500l5-5" stroke="#eee" stroke-width="1.200"/><path d="M775.500 119.500v3.800l-3.800-3.800z" fill="#eee"/><path d="M787 111.5h10l-4 4.2h-10z" fill="#d2d2d2"/><path d="M784.5 117.3h10.5l1.500-1.600" stroke="#d2d2d2" stroke-width="1.300" fill="none"/><path d="M784.5 119.9h10.5l1.500-1.600" stroke="#d2d2d2" stroke-width="1.300" fill="none"/><circle cx="794.500" cy="122.500" r="2.200" fill="#fbcd78"/><circle cx="798.5" cy="122.5" r="0.550" fill="#fbcd78"/><circle cx="797.3" cy="125.3" r="0.550" fill="#fbcd78"/><circle cx="794.5" cy="126.5" r="0.550" fill="#fbcd78"/><circle cx="791.7" cy="125.3" r="0.550" fill="#fbcd78"/><circle cx="790.5" cy="122.5" r="0.550" fill="#fbcd78"/><circle cx="791.7" cy="119.7" r="0.550" fill="#fbcd78"/><circle cx="794.5" cy="118.5" r="0.550" fill="#fbcd78"/><circle cx="797.3" cy="119.7" r="0.550" fill="#fbcd78"/><path d="M811 112h9l-4 4.5h-9z" fill="#d2d2d2"/><rect x="814.3" y="122.0" width="6.400" height="5.200" fill="#fbcd78"/><path d="M819.3 122.0v-1.800a1.900 1.900 0 0 1 3.800 0v1" stroke="#fbcd78" stroke-width="1.100" fill="none"/><path d="M835 111.5h10l-4 4.2h-10z" fill="#d2d2d2"/><path d="M832.5 117.3h10.5l1.500-1.600" stroke="#d2d2d2" stroke-width="1.300" fill="none"/><path d="M832.5 119.9h10.5l1.500-1.600" stroke="#d2d2d2" stroke-width="1.300" fill="none"/><path d="M844.500 118.500l3 3-3.500 4-3.500-3z" fill="#fbcd78"/><path d="M843.500 116l1.500-1 1 1.500 1.500-.5.500 2.500-2.500 1.500z" fill="#fff"/></svg>
<div class="t" style="left:687.40px;top:97.60px;font-size:12px;line-height:14px;color:#fff;transform:scaleX(0.9195);">Layer</div>
<div class="t" style="left:674.20px;top:112.60px;font-size:12px;line-height:14px;color:#fff;transform:scaleX(0.9691);">Properties</div>
<div class="t" style="left:813.10px;top:63.90px;font-size:12px;line-height:14px;color:#fff;transform:scaleX(0.9902);">www.cadblocksfree.</div>
<svg class="b" style="left:928.3px;top:68.2px;" width="9" height="6" viewBox="0 0 9 6"><path d="M1 1h7l-3.5 4z" fill="#fff"/></svg>
<div class="t" style="left:852.10px;top:87.70px;font-size:12px;line-height:14px;color:#fff;transform:scaleX(0.9919);">Make Current</div>
<div class="t" style="left:852.10px;top:111.70px;font-size:12px;line-height:14px;color:#fff;transform:scaleX(0.9829);">Match Layer</div>
<svg class="b" style="left:942px;top:55px;" width="162" height="80" viewBox="942 55 162 80"><path d="M962 60.500h13l4 4v19.500h-17z" fill="#6fc3f7"/><path d="M975 60.500v4h4z" fill="#e8e8e8"/><rect x="948.500" y="70.500" width="21" height="13.500" fill="#7a7a7a" stroke="#dadada" stroke-width="1.200"/><rect x="947" y="82.500" width="3" height="3" fill="#dadada"/><circle cx="968.500" cy="84.500" r="7" fill="#8a8a8a" fill-opacity="0.850" stroke="#dadada" stroke-width="1.200"/><rect x="988.5" y="68.0" width="8.500" height="7" fill="#707070" stroke="#d8d8d8" stroke-width="1"/><rect x="987.5" y="74.5" width="1.800" height="1.800" fill="#d8d8d8"/><circle cx="998.0" cy="76.0" r="3.200" fill="#808080" stroke="#d8d8d8" stroke-width="1"/><path d="M998.500 67.300L1002.5 66.1L1002.5 68.5z" fill="#fbcd78"/><path d="M998.500 67.300L1001.2 68.7L999.9 70.0z" fill="#fbcd78"/><path d="M998.500 67.300L999.7 71.3L997.3 71.3z" fill="#fbcd78"/><path d="M998.500 67.300L997.1 70.0L995.8 68.7z" fill="#fbcd78"/><path d="M998.500 67.300L994.5 68.5L994.5 66.1z" fill="#fbcd78"/><path d="M998.500 67.300L995.8 65.9L997.1 64.6z" fill="#fbcd78"/><path d="M998.500 67.300L997.3 63.3L999.7 63.3z" fill="#fbcd78"/><path d="M998.500 67.300L999.9 64.6L1001.2 65.9z" fill="#fbcd78"/><circle cx="998.500" cy="67.300" r="2.300" fill="#fbcd78"/><rect x="988.5" y="92.5" width="8.500" height="7" fill="#707070" stroke="#d8d8d8" stroke-width="1"/><rect x="987.5" y="99" width="1.800" height="1.800" fill="#d8d8d8"/><circle cx="998.0" cy="100.5" r="3.200" fill="#808080" stroke="#d8d8d8" stroke-width="1"/><path d="M1000 87.5l2.800 2.800-6 6-3.500.900.900-3.500z" fill="#fbcd78"/><path d="M1000 87.5l2.800 2.800-1.500 1.500-2.800-2.800z" fill="#b5653a"/><path d="M993.2 97.2l.9-3.500 2.600 2.600z" fill="#fff"/><path d="M987.500 112.500h8l-2 2 4.500 4.500 3.500-3 .5 3-7 7-7.500-8z" fill="#e2e2e2"/><circle cx="991" cy="116" r="1.100" fill="#555"/><path d="M991.500 120l2.500 2.500" stroke="#555" stroke-width="0.900"/><path d="M1000.5 111.5l2.800 2.800-6 6-3.500.900.900-3.500z" fill="#fbcd78"/><path d="M1000.5 111.5l2.800 2.800-1.500 1.500-2.800-2.800z" fill="#b5653a"/><path d="M993.7 121.2l.9-3.500 2.600 2.600z" fill="#fff"/></svg>
<div class="t" style="left:949.30px;top:97.20px;font-size:12px;line-height:14px;color:#fff;transform:scaleX(0.9630);">Insert</div>
<svg class="b" style="left:959.9px;top:113.3px;" width="7.4" height="5" viewBox="0 0 7.4 5"><path d="M1 1h5.4l-2.7 3z" fill="#fff"/></svg>
<div class="t" style="left:1008.40px;top:63.60px;font-size:12px;line-height:14px;color:#fff;transform:scaleX(0.9384);">Create</div>
<div class="t" style="left:1008.40px;top:87.70px;font-size:12px;line-height:14px;color:#fff;transform:scaleX(0.9527);">Edit</div>
<div class="t" style="left:1008.40px;top:111.70px;font-size:12px;line-height:14px;color:#fff;transform:scaleX(1.0103);">Edit Attributes</div>
<svg class="b" style="left:1089.8px;top:117.0px;" width="7.4" height="5" viewBox="0 0 7.4 5"><path d="M1 1h5.4l-2.7 3z" fill="#fff"/></svg>
<svg class="b" style="left:1103px;top:55px;" width="264" height="80" viewBox="1103 55 264 80"><defs><linearGradient id="cb2" x1="0" y1="0" x2="0" y2="1"><stop offset="0" stop-color="#6c6c6c"/><stop offset="0.500" stop-color="#585858"/><stop offset="1" stop-color="#464646"/></linearGradient></defs><rect x="1120" y="62" width="20" height="28" fill="#d8d8d8"/><rect x="1122.500" y="64.500" width="13" height="9.500" fill="#6fc3f7"/><rect x="1122" y="64" width="14" height="10.500" fill="none" stroke="#f4f4f4" stroke-width="0.800"/><path d="M1123 80.500h9M1123 85.500h9" stroke="#777" stroke-width="1"/><path d="M1126.500 78.500v4M1130.500 83.500v4" stroke="#555" stroke-width="1.300"/><path d="M1133.800 86.300L1138.800 83L1147.200 91.200L1142 94.600Z" fill="#fbcd78" stroke="#5b5b5b" stroke-width="0.600"/><path d="M1138.800 83L1143 79.800L1145 81.600L1148.300 79.500L1150.500 82L1148 84.800L1150 87L1147.200 91.200Z" fill="#f2f2f2"/><path d="M1175 70.3L1173.61 62.42A8 8 0 0 1 1182.06 66.54z" fill="#e8b563"/><path d="M1175 70.3L1182.06 66.54A8 8 0 0 1 1180.75 75.86z" fill="#c0392b"/><path d="M1175 70.3L1180.75 75.86A8 8 0 0 1 1171.49 77.49z" fill="#8a63d2"/><path d="M1175 70.3L1171.49 77.49A8 8 0 0 1 1167.08 69.19z" fill="#5b8fd6"/><path d="M1175 70.3L1167.08 69.19A8 8 0 0 1 1173.61 62.42z" fill="#52b788"/><rect x="1167" y="86" width="16" height="1.2" fill="#e0e0e0"/><rect x="1167" y="89.3" width="16" height="1.8" fill="#e0e0e0"/><rect x="1167" y="93" width="16" height="2.6" fill="#e0e0e0"/><rect x="1167" y="97.8" width="16" height="3.6" fill="#e0e0e0"/><path d="M1167 111.5h15.500" stroke="#e0e0e0" stroke-width="1" stroke-dasharray="1 1"/><path d="M1167 114.5h15.500" stroke="#e0e0e0" stroke-width="1" stroke-dasharray="2 1"/><path d="M1167 117.5h15.500" stroke="#e0e0e0" stroke-width="1" stroke-dasharray="4 1.500"/><path d="M1167 120.5h15.500" stroke="#e0e0e0" stroke-width="1" stroke-dasharray="5 1 2 1"/><path d="M1167 123.5h15.500" stroke="#e0e0e0" stroke-width="1" stroke-dasharray="7 1.500"/><rect x="1185.500" y="60.5" width="179" height="21" fill="url(#cb2)" stroke="#2c2c2c" stroke-width="1" stroke-dasharray="1 1"/><rect x="1185.500" y="83.5" width="179" height="21" fill="url(#cb2)" stroke="#2c2c2c" stroke-width="1" stroke-dasharray="1 1"/><rect x="1185.500" y="107.5" width="179" height="21" fill="url(#cb2)" stroke="#2c2c2c" stroke-width="1" stroke-dasharray="1 1"/><rect x="1198.500" y="63.500" width="15" height="15" fill="#fff"/><path d="M1189 93.500h64M1189 118.500h64" stroke="#f0f0f0" stroke-width="1"/></svg>
<div class="t" style="left:1118.30px;top:97.60px;font-size:12px;line-height:14px;color:#fff;transform:scaleX(1.0282);">Match</div>
<div class="t" style="left:1108.00px;top:112.60px;font-size:12px;line-height:14px;color:#fff;transform:scaleX(0.9691);">Properties</div>
<div class="t" style="left:1224.30px;top:63.90px;font-size:12px;line-height:14px;color:#fff;transform:scaleX(0.9223);">ByLayer</div>
<div class="t" style="left:1255.40px;top:86.60px;font-size:12px;line-height:14px;color:#fff;transform:scaleX(0.9155);">ByLayer</div>
<div class="t" style="left:1255.40px;top:110.80px;font-size:12px;line-height:14px;color:#fff;transform:scaleX(0.8574);">BYLAYER</div>
<svg class="b" style="left:1354.3px;top:68.0px;" width="9" height="6" viewBox="0 0 9 6"><path d="M1 1h7l-3.5 4z" fill="#fff"/></svg>
<svg class="b" style="left:1354.3px;top:91.2px;" width="9" height="6" viewBox="0 0 9 6"><path d="M1 1h7l-3.5 4z" fill="#fff"/></svg>
<svg class="b" style="left:1354.3px;top:114.6px;" width="9" height="6" viewBox="0 0 9 6"><path d="M1 1h7l-3.5 4z" fill="#fff"/></svg>
<svg class="b" style="left:1367px;top:55px;" width="70" height="80" viewBox="1367 55 70 80"><path d="M1379 66h-5v27h5M1389 93h5v-13" stroke="#f0f0f0" stroke-width="1.800" fill="none"/><path d="M1380 70.500h3l1.500 1.500h4.500v6h-9z" fill="#6fc3f7"/><rect x="1382" y="73" width="5" height="3" fill="#5a8fb8"/><circle cx="1384.500" cy="84.500" r="4.700" fill="#8a8a8a" stroke="#cfcfcf" stroke-width="1.400"/><polygon points="1396.0,62.0 1397.8,66.1 1401.9,64.4 1400.2,68.5 1404.3,70.3 1400.2,72.1 1401.9,76.2 1397.8,74.5 1396.0,78.6 1394.2,74.5 1390.1,76.2 1391.8,72.1 1387.7,70.3 1391.8,68.5 1390.1,64.4 1394.2,66.1" fill="#fbcd78"/><rect x="1416" y="65.0" width="4" height="4" fill="none" stroke="#6fc3f7" stroke-width="1"/><circle cx="1418" cy="73.5" r="2.300" fill="#8a8a8a" stroke="#cfcfcf" stroke-width="0.900"/><path d="M1422 63.500h2.500v14h-2.500" stroke="#e6e6e6" stroke-width="1.100" fill="none"/><path d="M1423.500 67.500l6 6M1429.500 67.500l-6 6" stroke="#c9683a" stroke-width="1.600"/><rect x="1416" y="89.5" width="4" height="4" fill="none" stroke="#6fc3f7" stroke-width="1"/><circle cx="1418" cy="98" r="2.300" fill="#8a8a8a" stroke="#cfcfcf" stroke-width="0.900"/><path d="M1416.500 87.500h-2.500v14h2.500M1422 87.500h2.500v7" stroke="#e6e6e6" stroke-width="1.100" fill="none"/><path d="M1427.500 94.500l2.500 2.500-5.500 5.500-3 .8.800-3z" fill="#fbcd78"/><path d="M1427.500 94.500l2.500 2.500-1.300 1.300-2.500-2.500z" fill="#b5653a"/><rect x="1410.500" y="108.500" width="23.500" height="21.500" fill="#5b72b5" stroke="#2a3d80" stroke-width="1"/><rect x="1411.500" y="109.500" width="21.500" height="6" fill="#8a8fd0" opacity="0.700"/><path d="M1417.500 112.500h-2.500v13h2.500M1422 112.500h2.500v4" stroke="#f4f4f4" stroke-width="1.100" fill="none"/><rect x="1418" y="113.500" width="3.600" height="3.600" fill="none" stroke="#5fd068" stroke-width="1"/><circle cx="1419.800" cy="121.500" r="2" fill="none" stroke="#5fd068" stroke-width="1"/><path d="M1422.500 115.500v10.500l2.500-2.300 1.800 4 1.700-.8-1.800-3.800h3.300z" fill="#fff" stroke="#444" stroke-width="0.400"/></svg>
<div class="t" style="left:1373.60px;top:97.60px;font-size:12px;line-height:14px;color:#fff;transform:scaleX(0.9715);">Group</div>
<svg class="b" style="left:1437px;top:55px;" width="97" height="80" viewBox="1437 55 97 80"><path d="M1459.500 70v8.500M1486.500 70v8.500" stroke="#e4e4e4" stroke-width="1.100"/><path d="M1462 74.500h22" stroke="#e4e4e4" stroke-width="1.100"/><path d="M1460.300 74.500l4-2.700v5.400zM1485.700 74.500l-4-2.700v5.400z" fill="#e4e4e4"/><rect x="1459" y="80" width="28.500" height="6" fill="#fbcd78"/><path d="M1461.2 80v2" stroke="#5b5b5b" stroke-width="0.900"/><path d="M1463.3 80v3.2" stroke="#5b5b5b" stroke-width="0.900"/><path d="M1465.3 80v2" stroke="#5b5b5b" stroke-width="0.900"/><path d="M1467.3 80v3.2" stroke="#5b5b5b" stroke-width="0.900"/><path d="M1469.4 80v2" stroke="#5b5b5b" stroke-width="0.900"/><path d="M1471.4 80v3.2" stroke="#5b5b5b" stroke-width="0.900"/><path d="M1473.4 80v2" stroke="#5b5b5b" stroke-width="0.900"/><path d="M1475.4 80v3.2" stroke="#5b5b5b" stroke-width="0.900"/><path d="M1477.5 80v2" stroke="#5b5b5b" stroke-width="0.900"/><path d="M1479.5 80v3.2" stroke="#5b5b5b" stroke-width="0.900"/><path d="M1481.5 80v2" stroke="#5b5b5b" stroke-width="0.900"/><path d="M1483.6 80v3.2" stroke="#5b5b5b" stroke-width="0.900"/><path d="M1485.6 80v2" stroke="#5b5b5b" stroke-width="0.900"/><path d="M1511 67.500v9.500l2.300-2 1.700 3.700 1.600-.7-1.700-3.600h3.100z" fill="#fff"/><rect x="1518.500" y="70.500" width="8.500" height="8" fill="#f4f4f4"/><path d="M1520 72.500h1.500M1522.500 72.500h3.500M1520 74.500h1.500M1522.500 74.500h3.500M1520 76.500h1.500M1522.500 76.500h3.500" stroke="#3b7fc4" stroke-width="0.900"/><path d="M1521 63l-3 4.500h2.500l-1.500 3.500 4.500-5h-2.500l2-3z" fill="#fbcd78"/><rect x="1511.500" y="87.500" width="14" height="14" rx="1.500" fill="none" stroke="#4fc27a" stroke-width="1.100" stroke-dasharray="1.500 1"/><rect x="1516" y="89.500" width="7.500" height="7.500" fill="#3fae6a"/><rect x="1513.500" y="92" width="7.500" height="7.500" fill="#3fae6a" stroke="#5b5b5b" stroke-width="0.800"/><path d="M1520 92v10.500l2.500-2.300 1.800 4 1.700-.8-1.800-3.800h3.300z" fill="#fff" stroke="#444" stroke-width="0.400"/><rect x="1513" y="111" width="12" height="16" fill="#d6d6d6"/><rect x="1514.500" y="112.500" width="9" height="2.500" fill="#d6d6d6" stroke="#5b5b5b" stroke-width="0.800"/><rect x="1514.6" y="117.0" width="2.400" height="2.400" fill="#5b5b5b"/><rect x="1517.8" y="117.0" width="2.400" height="2.400" fill="#5b5b5b"/><rect x="1521.0" y="117.0" width="2.400" height="2.400" fill="#5b5b5b"/><rect x="1514.6" y="120.2" width="2.400" height="2.400" fill="#5b5b5b"/><rect x="1517.8" y="120.2" width="2.400" height="2.400" fill="#5b5b5b"/><rect x="1521.0" y="120.2" width="2.400" height="2.400" fill="#5b5b5b"/><rect x="1514.6" y="123.4" width="2.400" height="2.400" fill="#5b5b5b"/><rect x="1517.8" y="123.4" width="2.400" height="2.400" fill="#5b5b5b"/><rect x="1521.0" y="123.4" width="2.400" height="2.400" fill="#5b5b5b"/></svg>
<div class="t" style="left:1450.40px;top:97.60px;font-size:12px;line-height:14px;color:#fff;transform:scaleX(0.9617);">Measure</div>
<svg class="b" style="left:1468.8999999999999px;top:114.1px;" width="7.4" height="5" viewBox="0 0 7.4 5"><path d="M1 1h5.4l-2.7 3z" fill="#fff"/></svg>
<svg class="b" style="left:1534px;top:55px;" width="80" height="80" viewBox="1534 55 80 80"><path d="M1548 65.500h7v-1.500h2v-1.500h4v1.500h2v1.500h7v24h-22z" fill="#dba968"/><rect x="1554.500" y="62" width="9" height="3" fill="#f0f0f0"/><path d="M1556 72.500h12.500l5.500 5.500v16h-18z" fill="#e6e6e6"/><path d="M1568.500 72.500v5.500h5.500z" fill="#c4c4c4"/><rect x="1591.500" y="63.500" width="10" height="12" fill="none" stroke="#dcdcdc" stroke-width="1.200"/><path d="M1593.500 67h5M1593.500 70h5M1593.500 73h3" stroke="#dcdcdc" stroke-width="1"/><path d="M1598 67l8 8M1606 67l-8 8" stroke="#f4f4f4" stroke-width="1.200"/><circle cx="1599.500" cy="77" r="1.700" fill="none" stroke="#f4f4f4" stroke-width="1"/><circle cx="1604.500" cy="77" r="1.700" fill="none" stroke="#f4f4f4" stroke-width="1"/><path d="M1592 87.500h6l3 3v8h-9z" fill="#d0d0d0"/><path d="M1596 91.500h6l3 3v8.500h-9z" fill="#e4e4e4" stroke="#5b5b5b" stroke-width="0.600"/><path d="M1602 91.500v3h3z" fill="#bdbdbd"/></svg>
<div class="t" style="left:1547.40px;top:97.60px;font-size:12px;line-height:14px;color:#fff;transform:scaleX(0.9027);">Paste</div>
<svg class="b" style="left:1557.8px;top:114.1px;" width="7.4" height="5" viewBox="0 0 7.4 5"><path d="M1 1h5.4l-2.7 3z" fill="#fff"/></svg>
<svg class="b" style="left:1615px;top:55px;" width="60" height="80" viewBox="1615 55 60 80"><path d="M1629 66h14v10h18.500v14h-32.500z" fill="#e2e2e2"/></svg>
<div class="t" style="left:1633.50px;top:97.70px;font-size:12px;line-height:14px;color:#fff;transform:scaleX(0.8628);">Base</div>
<svg class="b" style="left:1641.8px;top:114.1px;" width="7.4" height="5" viewBox="0 0 7.4 5"><path d="M1 1h5.4l-2.7 3z" fill="#fff"/></svg>
<svg class="b" style="left:0px;top:154px;" width="1912" height="28" viewBox="0 154 1912 28"><defs><linearGradient id="at" x1="0" y1="0" x2="0" y2="1"><stop offset="0" stop-color="#6c6c6c"/><stop offset="1" stop-color="#565656"/></linearGradient></defs><path d="M18.200000000000003 179.5C25.200000000000003 179.5 24.200000000000003 157 29.700000000000003 157H139.4C145.4 157 147.9 162 147.9 168C147.9 174 144.4 179.5 138.4 179.5Z" fill="#4c4c4c"/><path d="M141.4 179.5C148.4 179.5 147.4 157 152.9 157H325.4C331.4 157 333.9 162 333.9 168C333.9 174 330.4 179.5 324.4 179.5Z" fill="#4c4c4c"/><path d="M142.9 178.5C147.4 176.5 147.4 157 152.9 157" fill="none" stroke="#3a3a3a" stroke-width="1.2"/><path d="M327.4 179.5C334.4 179.5 333.4 157 338.9 157H472C478 157 480.5 162 480.5 168C480.5 174 477 179.5 471 179.5Z" fill="#4c4c4c"/><path d="M328.9 178.5C333.4 176.5 333.4 157 338.9 157" fill="none" stroke="#3a3a3a" stroke-width="1.2"/><path d="M474 179.5C481 179.5 480 157 485.5 157H688.6C694.6 157 697.1 162 697.1 168C697.1 174 693.6 179.5 687.6 179.5Z" fill="#4c4c4c"/><path d="M475.5 178.5C480 176.5 480 157 485.5 157" fill="none" stroke="#3a3a3a" stroke-width="1.2"/><path d="M690.6 179.5C697.6 179.5 696.6 157 702.1 157H844.3C850.3 157 852.8 162 852.8 168C852.8 174 849.3 179.5 843.3 179.5Z" fill="#4c4c4c"/><path d="M692.1 178.5C696.6 176.5 696.6 157 702.1 157" fill="none" stroke="#3a3a3a" stroke-width="1.2"/><path d="M846.3 179.5C853.3 179.5 852.3 157 857.8 157H1051.1C1057.1 157 1059.6 162 1059.6 168C1059.6 174 1056.1 179.5 1050.1 179.5Z" fill="#4c4c4c"/><path d="M847.8 178.5C852.3 176.5 852.3 157 857.8 157" fill="none" stroke="#3a3a3a" stroke-width="1.2"/><path d="M1053.1 179.5C1060.1 179.5 1059.1 157 1064.6 157H1240.3C1246.3 157 1248.8 162 1248.8 168C1248.8 174 1245.3 179.5 1239.3 179.5Z" fill="#4c4c4c"/><path d="M1054.6 178.5C1059.1 176.5 1059.1 157 1064.6 157" fill="none" stroke="#3a3a3a" stroke-width="1.2"/><path d="M1242.3 179.5C1249.3 179.5 1248.3 157 1253.8 157H1395.9C1401.9 157 1404.4 162 1404.4 168C1404.4 174 1400.9 179.5 1394.9 179.5Z" fill="#4c4c4c"/><path d="M1243.8 178.5C1248.3 176.5 1248.3 157 1253.8 157" fill="none" stroke="#3a3a3a" stroke-width="1.2"/><path d="M1397.9 179.5C1404.9 179.5 1403.9 157 1409.4 157H1647.5C1654.0 157 1654 179.5 1661 179.5Z" fill="url(#at)"/><path d="M1659.500 161C1665 161 1662.500 176 1669 176H1682.500V167.500C1682.500 163.500 1680.500 161 1676.500 161Z" fill="#4c4c4c"/><path d="M1666 168.800h8.500M1670.200 164.600v8.500" stroke="#d4d4d4" stroke-width="1.900"/><path d="M315.3 165l6 6M321.3 165l-6 6" stroke="#2e2e2e" stroke-width="1.700"/><path d="M462.3 165l6 6M468.3 165l-6 6" stroke="#2e2e2e" stroke-width="1.700"/><path d="M678.3 165l6 6M684.3 165l-6 6" stroke="#2e2e2e" stroke-width="1.700"/><path d="M834.5 165l6 6M840.5 165l-6 6" stroke="#2e2e2e" stroke-width="1.700"/><path d="M1041.5 165l6 6M1047.5 165l-6 6" stroke="#2e2e2e" stroke-width="1.700"/><path d="M1230.2 165l6 6M1236.2 165l-6 6" stroke="#2e2e2e" stroke-width="1.700"/><path d="M1386.1 165l6 6M1392.1 165l-6 6" stroke="#2e2e2e" stroke-width="1.700"/><path d="M1633.3 165l6 6M1639.3 165l-6 6" stroke="#444444" stroke-width="1.700"/><path d="M1886 162l4 3.500 4-3.500M1886 168.500l4 3.500 4-3.500" stroke="#c4c4c4" stroke-width="1.600" fill="none"/></svg>
<div class="t" style="left:36.20px;top:161.60px;font-size:12px;line-height:14px;color:#c9cde0;transform:scaleX(0.9510);">Start</div>
<div class="t" style="left:159.40px;top:161.60px;font-size:12px;line-height:14px;color:#c9cde0;transform:scaleX(0.9748);">model426-CatchBasinDetail</div>
<div class="t" style="left:345.40px;top:161.60px;font-size:12px;line-height:14px;color:#c9cde0;transform:scaleX(0.9736);">model501-CoatRack</div>
<div class="t" style="left:492.00px;top:161.60px;font-size:12px;line-height:14px;color:#c9cde0;transform:scaleX(0.9962);">model551-ContemporaryChair(1)</div>
<div class="t" style="left:708.60px;top:161.60px;font-size:12px;line-height:14px;color:#c9cde0;transform:scaleX(0.9728);">model601-DataSocket</div>
<div class="t" style="left:864.30px;top:161.60px;font-size:12px;line-height:14px;color:#c9cde0;transform:scaleX(0.9956);">model651-DesignerCeilingLight</div>
<div class="t" style="left:1071.10px;top:161.60px;font-size:12px;line-height:14px;color:#c9cde0;transform:scaleX(0.9902);">model701-DoorPocketDetail</div>
<div class="t" style="left:1260.30px;top:161.60px;font-size:12px;line-height:14px;color:#c9cde0;transform:scaleX(0.9783);">model751-DualSocket</div>
<div class="t" style="left:1415.90px;top:161.60px;font-size:12px;line-height:14px;color:#ffffff;transform:scaleX(0.9817);">model801-ElectricalShaverPointSymbol</div>
<div class="b" style="left:684px;top:656px;width:536px;height:1px;background:#c6c8ca;"></div>
<div class="b" style="left:684px;top:655px;width:536px;height:1px;background:rgba(198,200,202,0.25);"></div>
<div class="b" style="left:684px;top:884px;width:536px;height:1px;background:#c6c8ca;"></div>
<div class="b" style="left:684px;top:883px;width:536px;height:1px;background:rgba(198,200,202,0.25);"></div>
<div class="b" style="left:684px;top:656px;width:1px;height:229px;background:#c6c8ca;"></div>
<div class="b" style="left:685px;top:656px;width:1px;height:229px;background:rgba(198,200,202,0.35);"></div>
<div class="b" style="left:1219px;top:656px;width:1px;height:229px;background:#c6c8ca;"></div>
<div class="b" style="left:1220px;top:656px;width:1px;height:229px;background:rgba(198,200,202,0.35);"></div>
<div class="b" style="left:878px;top:614px;width:1px;height:158px;background:#c6c8ca;"></div>
<div class="b" style="left:879px;top:614px;width:1px;height:158px;background:rgba(198,200,202,0.35);"></div>
<div class="b" style="left:1024px;top:614px;width:1px;height:158px;background:#c6c8ca;"></div>
<div class="b" style="left:1025px;top:614px;width:1px;height:158px;background:rgba(198,200,202,0.35);"></div>
<div class="b" style="left:951px;top:337px;width:1px;height:111px;background:#c6c8ca;"></div>
<div class="b" style="left:952px;top:337px;width:1px;height:111px;background:rgba(198,200,202,0.35);"></div>
<svg class="b" style="left:780px;top:440px;" width="344" height="180" viewBox="0 0 344 180"><path d="M5.3 174 A166.4 166.4 0 0 1 338.1 174 Z" fill="#ffffff"/></svg>
<div class="t" style="left:6.90px;top:190.00px;font-size:12px;line-height:14px;color:#e4e4e4;transform:scaleX(1.2284);will-change:transform;">[−]</div>
<div class="t" style="left:24.00px;top:190.00px;font-size:12px;line-height:14px;color:#e4e4e4;transform:scaleX(1.0378);will-change:transform;">[Top]</div>
<div class="t" style="left:52.40px;top:190.00px;font-size:12px;line-height:14px;color:#e4e4e4;transform:scaleX(0.9767);will-change:transform;">[2D Wireframe]</div>
<svg class="b" style="left:1840px;top:190px;" width="56" height="16" viewBox="0 0 56 16"><rect x="2.700" y="9" width="10.500" height="2.600" fill="#f0f0f0"/><rect x="23" y="6.500" width="7" height="6" fill="none" stroke="#f0f0f0" stroke-width="1.600"/><path d="M25.500 5v-1.500h8v6.500h-2" fill="none" stroke="#f0f0f0" stroke-width="1.400"/><path d="M44.300 4.300l7 7.600M51.300 4.300l-7 7.600" stroke="#f0f0f0" stroke-width="2"/></svg>
<svg class="b" style="left:1740px;top:220px;" width="172" height="180" viewBox="1740 220 172 180"><circle cx="1821" cy="289" r="53.400" fill="none" stroke="#4a4b4e" stroke-width="13.400"/><rect x="1795.300" y="263.300" width="51.600" height="51.600" fill="#a9a9a9"/><rect x="1805.300" y="273.300" width="31.600" height="31.600" fill="#9d9d9d"/><rect x="1797.500" y="377.500" width="47.500" height="16" rx="3.500" fill="#8e8e8e" stroke="#5a5a5a" stroke-width="1"/><path d="M1832 382.500h7.500l-3.750 5z" fill="none" stroke="#c0c0c0" stroke-width="0.900"/></svg>
<div class="t" style="left:1810.70px;top:282.40px;font-size:13px;line-height:15px;color:#555555;transform:scaleX(0.8117);font-weight:bold;will-change:transform;">TOP</div>
<div class="t" style="left:1814.70px;top:222.10px;font-size:21.5px;line-height:24px;color:#b9b9b9;transform:scaleX(0.8244);font-weight:bold;will-change:transform;">N</div>
<div class="t" style="left:1814.70px;top:334.90px;font-size:21.5px;line-height:24px;color:#b9b9b9;transform:scaleX(0.8926);font-weight:bold;will-change:transform;">S</div>
<div class="t" style="left:1755.20px;top:277.70px;font-size:20.5px;line-height:23px;color:#b9b9b9;transform:scaleX(0.9975);font-weight:bold;will-change:transform;">W</div>
<div class="t" style="left:1871.40px;top:277.70px;font-size:20.5px;line-height:23px;color:#b9b9b9;transform:scaleX(0.9361);font-weight:bold;will-change:transform;">E</div>
<div class="t" style="left:1801.80px;top:378.40px;font-size:11.5px;line-height:12px;color:#484848;transform:scaleX(0.8722);will-change:transform;">WCS</div>
<svg class="b" style="left:1860px;top:410px;" width="46" height="230" viewBox="1860 410 46 230"><rect x="1868.500" y="418.500" width="31.500" height="212" rx="4" fill="#595959" stroke="#2c3036" stroke-width="1"/><circle cx="1894" cy="424" r="3" fill="none" stroke="#7d7d7d" stroke-width="0.900"/><path d="M1892.500 422.500l3 3M1895.500 422.500l-3 3" stroke="#7d7d7d" stroke-width="0.800"/><path d="M1873.500 448v-4a9 9 0 0 1 9-6.500h12.500v11a11 11 0 0 1-21.500 0z" fill="none" stroke="#7d7d7d" stroke-width="1.200"/><circle cx="1884" cy="448" r="6" fill="none" stroke="#7d7d7d" stroke-width="1.200"/><path d="M1879.500 452l-3.500 4M1888.500 452l3.500 4" stroke="#7d7d7d" stroke-width="1"/><path d="M1881.500 468h5l-2.500 2.500z" fill="#7d7d7d"/><path d="M1877 494q-3.500-3-4.500-5.500 2-1 4.500 1.500v-7q1.500-1.500 2.500 0v-2.500q1.500-1.500 2.500 0v-1q1.500-1.500 2.500 0v2q1.500-1.500 2.500 0v2q1.500-1 2.500 0 1 9-2 14-6 3-11 0z" fill="none" stroke="#7d7d7d" stroke-width="1.100"/><path d="M1873 509l10 10M1888 509l-15 15M1873 509h4M1873 509v4M1888 509h-4M1888 509v4M1873 524h4M1873 524v-4" stroke="#7d7d7d" stroke-width="1.200" fill="none"/><circle cx="1888" cy="524" r="4" fill="none" stroke="#7d7d7d" stroke-width="1.200"/><path d="M1891 527l4.500 4" stroke="#7d7d7d" stroke-width="2"/><path d="M1881.500 538h5l-2.500 2.500z" fill="#7d7d7d"/><ellipse cx="1884" cy="559.500" rx="11" ry="4.500" fill="none" stroke="#7d7d7d" stroke-width="1.100"/><path d="M1882 567v-14h-3l5-6.500 5 6.500h-3v14z" fill="#595959" stroke="#7d7d7d" stroke-width="1.100"/><path d="M1880.500 564.500l-4-2.500 4-2.500z" fill="#7d7d7d"/><path d="M1881.500 576h5l-2.500 2.500z" fill="#7d7d7d"/><rect x="1873" y="588.500" width="5.500" height="5.500" fill="none" stroke="#7d7d7d" stroke-width="1"/><rect x="1881" y="588.500" width="5.500" height="5.500" fill="none" stroke="#7d7d7d" stroke-width="1"/><rect x="1889" y="588.500" width="5.500" height="5.500" fill="none" stroke="#7d7d7d" stroke-width="1"/><rect x="1873" y="597.500" width="15.500" height="12.500" fill="none" stroke="#7d7d7d" stroke-width="1"/><path d="M1877 600l7 3.800-7 3.800z" fill="#7d7d7d"/><circle cx="1894" cy="624" r="3" fill="none" stroke="#7d7d7d" stroke-width="0.900"/><path d="M1892 623.500h4M1892.500 625.500h3" stroke="#7d7d7d" stroke-width="0.700"/></svg>
<svg class="b" style="left:10px;top:900px;" width="100" height="90" viewBox="10 900 100 90"><path d="M24.500 924.500v50h50" stroke="#f0f0f0" stroke-width="1" fill="none"/><rect x="20.500" y="969.500" width="9" height="9" fill="none" stroke="#f0f0f0" stroke-width="1"/><path d="M26 907l6.500 7 6.500-7M32.500 914v6" stroke="#f0f0f0" stroke-width="1" fill="none"/><path d="M79.500 960.500l12.500 12.500M92 960.500l-12.500 12.500" stroke="#f0f0f0" stroke-width="1"/></svg>
<div class="b" style="left:422px;top:936px;width:227.3px;height:55.3px;background:repeating-linear-gradient(90deg,#151a20 0,#151a20 1px,#1c2128 1px,#1c2128 2px);border:1px solid #e8e8e8;box-sizing:border-box;"></div>
<div class="t" style="left:438.90px;top:952.00px;font-size:21.5px;line-height:24px;color:#ffffff;transform:scaleX(0.9446);font-weight:bold;will-change:transform;">CAD</div>
<div class="t" style="left:484.60px;top:952.00px;font-size:21.5px;line-height:24px;color:#ffffff;transform:scaleX(0.8438);will-change:transform;">BLOCKS</div>
<div class="t" style="left:561.60px;top:941.00px;font-size:33px;line-height:37px;color:#6678b8;transform:scaleX(1.1484);font-style:italic;will-change:transform;font-family:'Liberation Serif',serif;">free</div>
<div class="t" style="left:656.20px;top:948.90px;font-size:9px;line-height:10px;color:#2f55d8;transform:scaleX(1.0556);will-change:transform;">These blocks were brought to you by CADBlocksFree.com.</div>
<div class="b" style="left:649px;top:962px;width:609px;height:1.3px;background:#f0f0f0;"></div>
<div class="t" style="left:993.50px;top:948.90px;font-size:9px;line-height:10px;color:#5e62c6;transform:scaleX(1.0512);will-change:transform;">For all of your 2D &amp; 3D CAD outsource requirements visit us:</div>
<div class="b" style="left:1258.6px;top:936.2px;width:226.4px;height:54.2px;background:linear-gradient(90deg,#8f73d6 0%,#a792dc 30%,#c6b4e4 60%,#e9e6ee 100%);border:1px solid #7d63c8;box-sizing:border-box;"></div>
<div class="t" style="left:1273.30px;top:952.50px;font-size:20px;line-height:22px;color:#ffffff;transform:scaleX(1.0593);font-weight:bold;will-change:transform;">C A D</div>
<div class="t" style="left:1353.00px;top:952.50px;font-size:20px;line-height:22px;color:#ffffff;transform:scaleX(1.0312);font-weight:bold;will-change:transform;">M A N</div>
<div class="t" style="left:1436.20px;top:952.50px;font-size:20px;line-height:22px;color:#ffffff;transform:scaleX(1.0378);font-weight:bold;will-change:transform;">D O</div>
<div class="b" style="left:1339px;top:961px;width:5.5px;height:5px;background:#3b3b7a;"></div>
<div class="b" style="left:1422px;top:961px;width:5.5px;height:5px;background:#3b3b7a;"></div>
<div class="b" style="left:445px;top:911px;width:788px;height:13.5px;background:rgba(84,86,88,0.95);border-radius:2px;"></div>
<div class="t" style="left:447.70px;top:911.60px;font-size:11.5px;line-height:13px;color:#d6d6d6;transform:scaleX(1.0115);font-family:'Liberation Mono',monospace;will-change:transform;">Autodesk DWG.  This file is a TrustedDWG last saved by an Autodesk application or Autodesk licensed application.</div>
<div class="b" style="left:445px;top:931px;width:60px;height:13.5px;background:rgba(84,86,88,0.95);border-radius:2px;"></div>
<div class="t" style="left:447.70px;top:931.60px;font-size:11.5px;line-height:13px;color:#d6d6d6;transform:scaleX(0.9745);font-family:'Liberation Mono',monospace;will-change:transform;">Command:</div>
<div class="b" style="left:445px;top:951px;width:60px;height:13.5px;background:rgba(84,86,88,0.95);border-radius:2px;"></div>
<div class="t" style="left:447.70px;top:951.60px;font-size:11.5px;line-height:13px;color:#d6d6d6;transform:scaleX(0.9745);font-family:'Liberation Mono',monospace;will-change:transform;">Command:</div>
<div class="b" style="left:383.5px;top:968.5px;width:55.5px;height:25px;background:linear-gradient(#585858,#3e3e3e);border-radius:3px 0 0 3px;"></div>
<div class="b" style="left:439px;top:968.5px;width:1086.5px;height:25px;background:rgba(197,197,197,0.95);border-radius:0 2px 2px 0;"></div>
<div class="b" style="left:439px;top:968.5px;width:1086.5px;height:1px;background:rgba(150,150,150,0.6);"></div>
<div class="b" style="left:1258.6px;top:968.5px;width:226.4px;height:22px;background:linear-gradient(90deg,#d6cbee 0%,#e2dcf0 45%,#f0eff4 100%);border:1px solid #cfc4ec;border-top:none;box-sizing:border-box;"></div>
<div class="b" style="left:439px;top:969.5px;width:209px;height:20px;background:rgba(0,0,0,0.045);"></div>
<div class="b" style="left:439px;top:989.6px;width:210px;height:1.2px;background:rgba(238,238,238,0.85);"></div>
<div class="b" style="left:647.8px;top:969px;width:1.2px;height:21.5px;background:rgba(238,238,238,0.85);"></div>
<div class="t" style="left:656.20px;top:968.00px;font-size:9px;line-height:10px;color:#ffffff;transform:scaleX(1.0554);font-weight:bold;will-change:transform;">www.cadblocksfree.com</div>
<div class="t" style="left:1147.40px;top:968.00px;font-size:9px;line-height:10px;color:#dcdcf4;transform:scaleX(1.1286);will-change:transform;">www.cadmando.co.uk</div>
<svg class="b" style="left:380px;top:965px;" width="1150" height="32" viewBox="380 965 1150 32"><g fill="#8a8a8a"><rect x="387" y="971.0" width="1.200" height="1.200"/><rect x="389.500" y="971.0" width="1.200" height="1.200"/><rect x="387" y="973.7" width="1.200" height="1.200"/><rect x="389.500" y="973.7" width="1.200" height="1.200"/><rect x="387" y="976.4" width="1.200" height="1.200"/><rect x="389.500" y="976.4" width="1.200" height="1.200"/><rect x="387" y="979.1" width="1.200" height="1.200"/><rect x="389.500" y="979.1" width="1.200" height="1.200"/><rect x="387" y="981.8" width="1.200" height="1.200"/><rect x="389.500" y="981.8" width="1.200" height="1.200"/><rect x="387" y="984.5" width="1.200" height="1.200"/><rect x="389.500" y="984.5" width="1.200" height="1.200"/><rect x="387" y="987.2" width="1.200" height="1.200"/><rect x="389.500" y="987.2" width="1.200" height="1.200"/><rect x="387" y="989.9" width="1.200" height="1.200"/><rect x="389.500" y="989.9" width="1.200" height="1.200"/></g><path d="M399 977l7.500 7.500M406.500 977l-7.500 7.500" stroke="#e8e8e8" stroke-width="1.800"/><path d="M420.500 988.500l7-7.500" stroke="#e8e8e8" stroke-width="2.200"/><path d="M426 976.500a3.800 3.800 0 1 0 4.500 4.500l-2.500.5-2-2z" fill="#e8e8e8"/><rect x="445" y="976.500" width="14" height="10" fill="#7a7a7a" stroke="#4a4a4a" stroke-width="1"/><path d="M447.500 980l2.500 1.800-2.500 1.800M451.500 984h4" stroke="#e8e8e8" stroke-width="0.900" fill="none"/><path d="M462 979.500h5l-2.500 3z" fill="#5a5a5a"/><path d="M1513.500 983.500h7.500l-3.750-4.500z" fill="#1e1e1e"/></svg>
<div class="t" style="left:476.40px;top:975.00px;font-size:11.5px;line-height:13px;color:#868686;transform:scaleX(0.9947);font-style:italic;font-family:'Liberation Mono',monospace;will-change:transform;">Type a command</div>
<div class="b" style="left:439px;top:969.5px;width:200px;height:8px;overflow:hidden;opacity:0.55;">
<div class="t" style="left:-0.10px;top:-17.50px;font-size:21.5px;line-height:24px;color:#ffffff;transform:scaleX(0.9446);font-weight:bold;will-change:transform;">CAD</div>
<div class="t" style="left:45.60px;top:-17.50px;font-size:21.5px;line-height:24px;color:#ffffff;transform:scaleX(0.8438);will-change:transform;">BLOCKS</div>
<div class="t" style="left:122.60px;top:-28.50px;font-size:33px;line-height:37px;color:#aab4dc;transform:scaleX(1.1484);font-style:italic;will-change:transform;font-family:'Liberation Serif',serif;">free</div>
</div>
<svg class="b" style="left:0px;top:993px;" width="200" height="30" viewBox="0 993 200 30"><defs><linearGradient id="mt" x1="0" y1="0" x2="0" y2="1"><stop offset="0" stop-color="#5a5a5a"/><stop offset="1" stop-color="#7c7c7c"/></linearGradient></defs><path d="M11 995C19 995 17 1013 26 1013H64C71 1013 69 995 77 995Z" fill="url(#mt)"/><path d="M71 995C78.500 995 76 1013 84 1013H131C138 1013 136 995 144 995Z" fill="#5b5b5b"/><path d="M73.500 997C77 1001 76.500 1013 84 1013" stroke="#3a3a3a" stroke-width="1.200" fill="none"/><path d="M151 995.500h14.500q0 15.500-12 15.500h-10.500q0-15.500 8-15.500z" fill="#515151"/><path d="M149.500 1004.200h8.500M153.800 1000v8.500" stroke="#e8e8e8" stroke-width="1.800"/></svg>
<div class="t" style="left:27.40px;top:996.80px;font-size:12px;line-height:14px;color:#fff;transform:scaleX(1.0039);font-weight:bold;">Model</div>
<div class="t" style="left:85.60px;top:996.80px;font-size:12px;line-height:14px;color:#c9cde0;transform:scaleX(0.9461);">Layout1</div>
<div class="b" style="left:1312px;top:995px;width:592px;height:28.5px;background:#555555;"></div>
<div class="b" style="left:1312px;top:995px;width:592px;height:1px;background:#5e5e5e;"></div>
<div class="b" style="left:1314px;top:996.3px;width:48.5px;height:25.6px;background:#4e4e4e;border:1px solid #6e6e6e;box-sizing:border-box;"></div>
<div class="b" style="left:1364.5px;top:996.3px;width:64.5px;height:25.6px;background:#4e4e4e;border:1px solid #6e6e6e;box-sizing:border-box;"></div>
<div class="b" style="left:1430.5px;top:996.3px;width:167.5px;height:25.6px;background:#4e4e4e;border:1px solid #6e6e6e;box-sizing:border-box;"></div>
<div class="b" style="left:1599.6px;top:996.3px;width:106.20000000000005px;height:25.6px;background:#4e4e4e;border:1px solid #6e6e6e;box-sizing:border-box;"></div>
<div class="b" style="left:1707.5px;top:996.3px;width:64.90000000000009px;height:25.6px;background:#4e4e4e;border:1px solid #6e6e6e;box-sizing:border-box;"></div>
<div class="b" style="left:1774.4px;top:996.3px;width:25.09999999999991px;height:25.6px;background:#4e4e4e;border:1px solid #6e6e6e;box-sizing:border-box;"></div>
<div class="b" style="left:1801.2px;top:996.3px;width:50.200000000000045px;height:25.6px;background:#4e4e4e;border:1px solid #6e6e6e;box-sizing:border-box;"></div>
<div class="b" style="left:1853px;top:996.3px;width:50px;height:25.6px;background:#4e4e4e;border:1px solid #6e6e6e;box-sizing:border-box;"></div>
<div class="b" style="left:1747px;top:997px;width:1px;height:24px;background:#6e6e6e;"></div>
<div class="t" style="left:1318.60px;top:1001.70px;font-size:12px;line-height:14px;color:#fff;transform:scaleX(0.9327);">MODEL</div>
<svg class="b" style="left:1312px;top:995px;" width="592" height="28" viewBox="1312 995 592 28"><path d="M1372.5 1001v15M1369 1004.5h15" stroke="#f0f0f0" stroke-width="1.100"/><path d="M1376.5 1001v15M1369 1008.5h15" stroke="#f0f0f0" stroke-width="1.100"/><path d="M1380.5 1001v15M1369 1012.5h15" stroke="#f0f0f0" stroke-width="1.100"/><rect x="1395.0" y="1002.5" width="2" height="2" fill="#f0f0f0"/><rect x="1400.5" y="1002.5" width="2" height="2" fill="#f0f0f0"/><rect x="1406.0" y="1002.5" width="2" height="2" fill="#f0f0f0"/><rect x="1395.0" y="1008.0" width="2" height="2" fill="#f0f0f0"/><rect x="1400.5" y="1008.0" width="2" height="2" fill="#f0f0f0"/><rect x="1406.0" y="1008.0" width="2" height="2" fill="#f0f0f0"/><rect x="1395.0" y="1013.5" width="2" height="2" fill="#f0f0f0"/><rect x="1400.5" y="1013.5" width="2" height="2" fill="#f0f0f0"/><rect x="1406.0" y="1013.5" width="2" height="2" fill="#f0f0f0"/><path d="M1417.1 1007.0h7.400l-3.700 4.400z" fill="#f0f0f0"/><path d="M1435.500 1001v15.500h15.500M1435.500 1011.500h5v5" stroke="#f0f0f0" stroke-width="1.100" fill="none"/><circle cx="1466" cy="1009.500" r="6.500" stroke="#f0f0f0" stroke-width="1.100" fill="none"/><path d="M1466 1009.500h9M1466 1009.500l7-7.500" stroke="#f0f0f0" stroke-width="1.100"/><path d="M1482.8 1007.0h7.400l-3.700 4.400z" fill="#f0f0f0"/><path d="M1505.500 1001v15.500" stroke="#4fc56a" stroke-width="1.200"/><path d="M1499 1002.500l13 12.500" stroke="#c9683a" stroke-width="1.100"/><rect x="1504" y="1007.500" width="3" height="3" fill="none" stroke="#f0f0f0" stroke-width="0.900"/><path d="M1521.8999999999999 1007.0h7.400l-3.700 4.400z" fill="#f0f0f0"/><rect x="1535" y="998" width="22" height="22" fill="#5b8cc6"/><rect x="1559" y="998" width="22.300" height="22" fill="#5b8cc6"/><path d="M1538 1015.500h16M1540 1015.500l13-11.500" stroke="#f0f0f0" stroke-width="1.100"/><rect x="1544.500" y="1008.500" width="2.600" height="2.600" fill="#f0f0f0"/><rect x="1564.500" y="1003.500" width="13" height="12.500" stroke="#f0f0f0" stroke-width="1.100" fill="none"/><rect x="1562.500" y="1001.500" width="4" height="4" stroke="#f0f0f0" stroke-width="1" fill="#5b8cc6"/><path d="M1585.7 1007.0h7.400l-3.700 4.400z" fill="#f0f0f0"/><rect x="1601.200" y="998" width="21.800" height="22" fill="#5b8cc6"/><path d="M1610.5 1000.500l2.400 8.500 4.800 7.500-5.400-3-1.800 3.500-1.800-3.500-5.400 3 4.800-7.500z" fill="#f0f0f0"/><circle cx="1618" cy="1003.500" r="2" stroke="#f0f0f0" stroke-width="0.900" fill="none"/><path d="M1634.5 1000.500l2.400 8.500 4.800 7.500-5.400-3-1.800 3.500-1.800-3.500-5.400 3 4.800-7.500z" fill="#d8d8d8"/><path d="M1642 1000l-3 4h2l-1.500 3.500 4-4.500h-2l2-3z" fill="#d8d8d8"/><path d="M1659.5 1000.500l2.400 8.500 4.800 7.500-5.400-3-1.800 3.500-1.800-3.500-5.400 3 4.800-7.500z" fill="#d8d8d8"/><path d="M1694.3 1007.0h7.400l-3.700 4.400z" fill="#f0f0f0"/><path d="M1723.5 1009.0L1727.1 1009.0" stroke="#e4e4e4" stroke-width="3.200"/><path d="M1722.3 1011.8L1724.9 1014.4" stroke="#e4e4e4" stroke-width="3.200"/><path d="M1719.5 1013.0L1719.5 1016.6" stroke="#e4e4e4" stroke-width="3.200"/><path d="M1716.7 1011.8L1714.1 1014.4" stroke="#e4e4e4" stroke-width="3.200"/><path d="M1715.5 1009.0L1711.9 1009.0" stroke="#e4e4e4" stroke-width="3.200"/><path d="M1716.7 1006.2L1714.1 1003.6" stroke="#e4e4e4" stroke-width="3.200"/><path d="M1719.5 1005.0L1719.5 1001.4" stroke="#e4e4e4" stroke-width="3.200"/><path d="M1722.3 1006.2L1724.9 1003.6" stroke="#e4e4e4" stroke-width="3.200"/><circle cx="1719.5" cy="1009" r="4.300" fill="none" stroke="#e4e4e4" stroke-width="3"/><path d="M1735.7 1007.0h7.400l-3.700 4.400z" fill="#f0f0f0"/><path d="M1752 1009h16M1760 1001v16" stroke="#f0f0f0" stroke-width="1.400"/><rect x="1779.500" y="1002.500" width="5.500" height="5.500" stroke="#f0f0f0" stroke-width="1" fill="none"/><circle cx="1791.500" cy="1008" r="3.200" stroke="#f0f0f0" stroke-width="1" fill="none"/><path d="M1785.500 1011.500l3.300 5.500h-6.600z" stroke="#f0f0f0" stroke-width="1" fill="none"/><path d="M1806 1002h6.500l2.500 2.500v6.500h-9z" fill="#7db7ea"/><rect x="1806" y="1011" width="6" height="4.500" fill="#fbcd78"/><path d="M1808.500 1003v6M1806.500 1006h5" stroke="#fff" stroke-width="0.800"/><path d="M1812.500 1014.500l2 2 4-4.500" stroke="#4fc56a" stroke-width="1.200" fill="none"/><rect x="1829" y="1002.500" width="13" height="9.500" fill="#e8e8e8"/><path d="M1830 1009.500l3.500-5 3 4 2-2 3 4" stroke="#4a6fa8" stroke-width="1" fill="none"/><path d="M1840 1010l4 7.500h-8z" fill="#c9683a"/><path d="M1840 1012.500v2.500" stroke="#fff" stroke-width="0.900"/><rect x="1858.600" y="1003.600" width="15" height="11" stroke="#f0f0f0" stroke-width="1.100" fill="none"/><path d="M1861 1012.500l3.500-3.500M1861 1009.500v3h3M1871 1005.500l-3.500 3.500M1868 1005.500h3v3" stroke="#f0f0f0" stroke-width="0.900" fill="none"/><path d="M1882 1003h16M1882 1009h16M1882 1015h16" stroke="#f0f0f0" stroke-width="1.800"/></svg>
<div class="t" style="left:1677.00px;top:1002.30px;font-size:12px;line-height:14px;color:#ffffff;transform:scaleX(0.7733);-webkit-text-stroke:0.3px #fff;">1:1</div>
</div></div></body></html>
